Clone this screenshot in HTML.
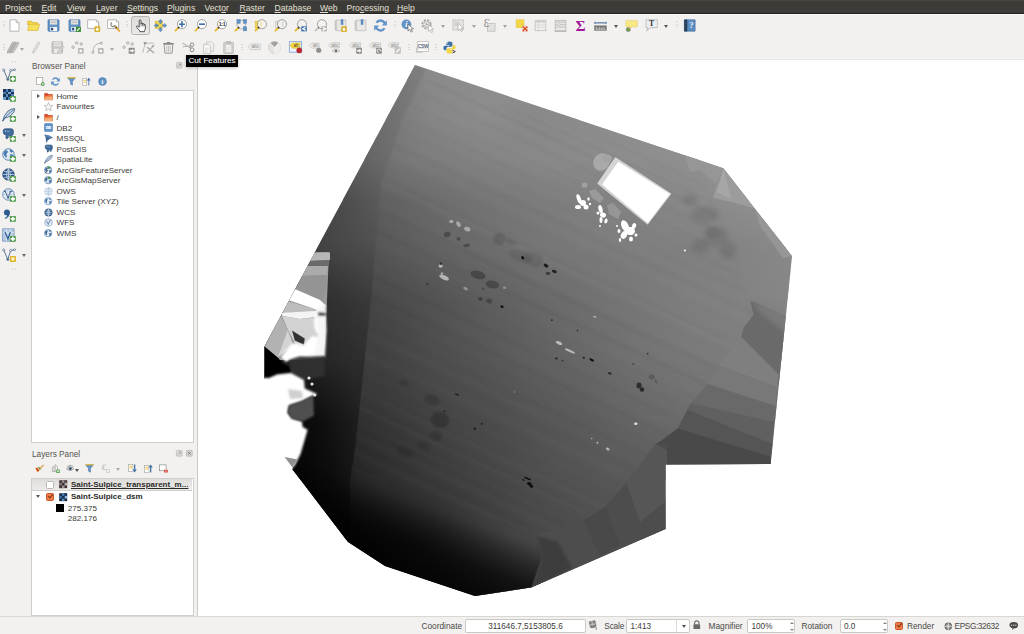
<!DOCTYPE html>
<html lang="en"><head><meta charset="utf-8"><title>QGIS</title>
<style>
html,body{margin:0;padding:0}
body{width:1024px;height:634px;position:relative;overflow:hidden;background:#f2f1f0;font-family:"Liberation Sans","DejaVu Sans",sans-serif;font-size:8.2px;color:#3c3b37}
body *{position:absolute;box-sizing:border-box}
u{position:static;text-decoration:underline}
#menubar{left:0;top:0;width:1024px;height:14px;background:linear-gradient(#4b4a45 0,#3c3b37 1.6px);border-bottom:1px solid #24221f}
.mi{top:2.8px;color:#e4e0d8;font-size:8.6px;line-height:10px;white-space:nowrap}
.mi u{text-decoration-thickness:0.6px;text-underline-offset:1px}
#tb{left:0;top:14px;width:1024px;height:45px;background:#f2f1f0;border-top:1.2px solid #fafaf9;border-bottom:1px solid #f5f4f3}
.ic{overflow:visible}
.ar{width:0;height:0;border-left:2.5px solid transparent;border-right:2.5px solid transparent;border-top:3px solid #666}
.sp{width:2px;height:8px;background:repeating-linear-gradient(#d9d7d3 0 1px,transparent 1px 2.6px)}
.hd{width:4px;height:2px;background:repeating-linear-gradient(90deg,#dad8d4 0 1px,transparent 1px 2.6px)}
#panbtn{left:131px;top:16px;width:19px;height:18.5px;border:1px solid #b5b3af;border-radius:2.5px;background:linear-gradient(#dedcd9,#eceae8)}
.ptitle{font-size:8.25px;line-height:12px;color:#55544f;white-space:nowrap}
.tree{background:#fff;border:1px solid #d0ceca}
.ti{font-size:8.1px;line-height:12px;color:#3c3b37;white-space:nowrap}
.ti.b{font-weight:bold;font-size:8px;color:#2c2b28}
.ex{width:0;height:0;border-top:2.5px solid transparent;border-bottom:2.5px solid transparent;border-left:3.5px solid #5a5955}
.exd{width:0;height:0;border-left:2.5px solid transparent;border-right:2.5px solid transparent;border-top:3.5px solid #5a5955}
#sel{left:32px;top:478.5px;width:160px;height:12px;background:linear-gradient(#dfddda,#ecebe9);border-bottom:1px solid #d0cecb}
.cb{width:8px;height:8px;background:#fff;border:1px solid #bab8b4;border-radius:1.5px}
.cb.on{background:#ef7b46;border-color:#c9562a}
.cb.on:after{content:"";position:absolute;left:0.9px;top:0.8px;width:4.2px;height:2.3px;border-left:1.3px solid #7a3414;border-bottom:1.3px solid #7a3414;transform:rotate(-50deg)}
#canvas{left:197px;top:58.5px;width:827px;height:558px;background:#fff;border-left:1px solid #cdcbc7;border-top:1px solid #e8e6e3}
#tip{left:186px;top:54.5px;width:52px;height:12.5px;background:#000;color:#fff;font-size:8.1px;line-height:12.5px;text-align:center;white-space:nowrap;box-shadow:0 1px 3px rgba(0,0,0,.25);letter-spacing:0.02px;-webkit-text-stroke:0.1px #fff}
#status{left:0;top:616px;width:1024px;height:18px;background:#f2f1f0;border-top:1px solid #d9d7d3}
.st{font-size:8.3px;line-height:12.8px;color:#4a4945;white-space:nowrap}
.inp{height:13.4px;background:#fff;border:1px solid #cbc9c5;border-radius:2px;font-size:8.2px;line-height:13.4px;color:#3c3b37;white-space:nowrap}
.su{width:0;height:0;border-left:2px solid transparent;border-right:2px solid transparent;border-bottom:2.5px solid #8a8884}
.sd{width:0;height:0;border-left:2px solid transparent;border-right:2px solid transparent;border-top:2.5px solid #8a8884}
</style></head>
<body>
<div id="menubar">
<span class="mi" style="left:5px">Pro<u>j</u>ect</span>
<span class="mi" style="left:41.5px"><u>E</u>dit</span>
<span class="mi" style="left:67px"><u>V</u>iew</span>
<span class="mi" style="left:96px"><u>L</u>ayer</span>
<span class="mi" style="left:127px"><u>S</u>ettings</span>
<span class="mi" style="left:167px"><u>P</u>lugins</span>
<span class="mi" style="left:204.5px">Vect<u>o</u>r</span>
<span class="mi" style="left:239.5px"><u>R</u>aster</span>
<span class="mi" style="left:274.5px"><u>D</u>atabase</span>
<span class="mi" style="left:320px"><u>W</u>eb</span>
<span class="mi" style="left:346.5px">Pro<u>c</u>essing</span>
<span class="mi" style="left:397px"><u>H</u>elp</span>
</div>
<div id="tb"></div>
<i class="sp" style="left:3.0px;top:21.0px"></i>
<i class="sp" style="left:126.0px;top:21.0px"></i>
<i class="sp" style="left:393.5px;top:21.0px"></i>
<i class="sp" style="left:675.5px;top:21.0px"></i>
<div id="panbtn"></div>
<svg class="ic" style="left:134.3px;top:18.8px" width="13" height="13" viewBox="0 0 16 16"><path d="M6.4 10.2 V2.4 Q6.4 1 7.5 1 Q8.6 1 8.6 2.4 V6 Q8.6 4.9 9.6 4.9 Q10.6 4.9 10.6 6.1 V6.7 Q10.6 5.7 11.5 5.7 Q12.4 5.7 12.4 6.9 V7.5 Q12.4 6.6 13.2 6.6 Q14 6.6 14 7.8 V11 Q14 13.4 12.8 14.6 V15.6 H7.2 V14.6 Q5.8 13.4 3.6 10.6 Q2.6 9.2 3.4 8.6 Q4.2 8.1 5.2 9.2 Z" fill="#fff" stroke="#2a2a2a" stroke-width="1" stroke-linejoin="round"/><path d="M8.6 6V9M10.6 6.7V9.2M12.4 7.5V9.4" stroke="#2a2a2a" stroke-width="0.7"/></svg>
<svg class="ic" style="left:7.5px;top:18.5px" width="13" height="13" viewBox="0 0 16 16"><path d="M2.5 1 H10 L13.5 4.5 V15 H2.5 Z" fill="#fff" stroke="#a9a8a6" stroke-width="1"/><path d="M10 1 V4.5 H13.5" fill="#e6e5e3" stroke="#a9a8a6" stroke-width="0.9"/></svg>
<svg class="ic" style="left:27.0px;top:18.5px" width="13" height="13" viewBox="0 0 16 16"><path d="M0.8 2.6 H5.5 L6.8 4.4 H13 V7 H0.8 Z" fill="#f3d64a" stroke="#d9b22e" stroke-width="0.8"/><path d="M0.8 14.2 L2.6 6.4 H15.6 L13.4 14.2 Z" fill="#f7df5e" stroke="#d9b22e" stroke-width="0.8"/></svg>
<svg class="ic" style="left:47.0px;top:18.5px" width="13" height="13" viewBox="0 0 16 16"><rect x="1.2" y="0.8" width="13.6" height="14.4" rx="1.4" fill="#6293c6" stroke="#3f6fa8" stroke-width="0.8"/><rect x="3.6" y="0.8" width="8.8" height="6" fill="#e4e3e1"/><path d="M4.4 2.6H11.6M4.4 4.4H11.6" stroke="#b5b4b2" stroke-width="0.8"/><rect x="4" y="9.8" width="8.4" height="5.2" fill="#f4f4f4"/><rect x="5" y="10.8" width="2.6" height="3.2" fill="#2c4f7c"/></svg>
<svg class="ic" style="left:67.5px;top:18.5px" width="13" height="13" viewBox="0 0 16 16"><rect x="1.2" y="0.8" width="13.6" height="14.4" rx="1.4" fill="#6293c6" stroke="#3f6fa8" stroke-width="0.8"/><rect x="3.6" y="0.8" width="8.8" height="6" fill="#e4e3e1"/><path d="M4.4 2.6H11.6M4.4 4.4H11.6" stroke="#b5b4b2" stroke-width="0.8"/><rect x="4" y="9.8" width="8.4" height="5.2" fill="#f4f4f4"/><rect x="5" y="10.8" width="2.6" height="3.2" fill="#2c4f7c"/><rect x="9.6" y="9.6" width="6.4" height="6.4" rx="0.8" fill="#3f8f3a"/><path d="M11 14.6 L14.4 11.2" stroke="#fff" stroke-width="1.4"/></svg>
<svg class="ic" style="left:86.7px;top:18.5px" width="13" height="13" viewBox="0 0 16 16"><path d="M0.8 1 H11.5 L14.2 3.7 V11.6 H0.8 Z" fill="#fff" stroke="#a9a8a6" stroke-width="1"/><path d="M11.5 1 V3.7 H14.2" fill="none" stroke="#a9a8a6" stroke-width="0.8"/><path d="M14.8 4.6 V12.2" stroke="#c8c7c5" stroke-width="0.8"/><rect x="9.2" y="9" width="7" height="7" rx="0.8" fill="#d8b230"/><path d="M12.7 10.3 L13.5 11.7 15 12 13.9 13.1 14.2 14.7 12.7 14 11.2 14.7 11.5 13.1 10.4 12 11.9 11.7Z" fill="#fff"/></svg>
<svg class="ic" style="left:107.0px;top:18.5px" width="13" height="13" viewBox="0 0 16 16"><path d="M0.8 1 H11.5 L14.2 3.7 V11.6 H0.8 Z" fill="#fff" stroke="#a9a8a6" stroke-width="1"/><path d="M11.5 1 V3.7 H14.2" fill="none" stroke="#a9a8a6" stroke-width="0.8"/><path d="M14.8 4.6 V12.2" stroke="#c8c7c5" stroke-width="0.8"/><path d="M6.2 4.4 A2.6 2.6 0 1 0 9.8 7.6" fill="none" stroke="#8e8d8b" stroke-width="1.6"/><path d="M9 8 L11 10" stroke="#8e8d8b" stroke-width="2"/><path d="M10.8 9.8 L15 14.6" stroke="#e5a93b" stroke-width="2.4" stroke-linecap="round"/><path d="M10.8 9.8 L12 11.2" stroke="#6e5a2c" stroke-width="2.4"/></svg>
<svg class="ic" style="left:154.0px;top:18.5px" width="13" height="13" viewBox="0 0 16 16"><rect x="1.4" y="2.6" width="9" height="9" fill="#f3d64a" stroke="#d9b22e" stroke-width="0.6"/><g fill="#6293c6" stroke="#3f6fa8" stroke-width="0.5"><path d="M8 0.2 L10.6 3 H9 V5.4 H7 V3 H5.4Z"/><path d="M8 15.8 L10.6 13 H9 V10.6 H7 V13 H5.4Z"/><path d="M0.2 8 L3 5.4 V7 H5.4 V9 H3 V10.6Z"/><path d="M15.8 8 L13 5.4 V7 H10.6 V9 H13 V10.6Z"/></g><rect x="6.6" y="6.6" width="2.8" height="2.8" fill="#f3d64a"/></svg>
<svg class="ic" style="left:174.0px;top:18.5px" width="13" height="13" viewBox="0 0 16 16"><circle cx="9.8" cy="6.4" r="5.6" fill="#fff" stroke="#8f8f8d" stroke-width="1"/><path d="M6.2 6.4H13.4M9.8 2.8V10" stroke="#3f6fa8" stroke-width="2"/><path d="M5.6 10.6 L1.2 15" stroke="#e8b928" stroke-width="2.2" stroke-linecap="butt"/><path d="M6.3 9.9 L5 11.2" stroke="#333" stroke-width="2.2"/></svg>
<svg class="ic" style="left:194.0px;top:18.5px" width="13" height="13" viewBox="0 0 16 16"><circle cx="9.8" cy="6.4" r="5.6" fill="#fff" stroke="#8f8f8d" stroke-width="1"/><path d="M6.2 6.4H13.4" stroke="#3f6fa8" stroke-width="2"/><path d="M5.6 10.6 L1.2 15" stroke="#e8b928" stroke-width="2.2" stroke-linecap="butt"/><path d="M6.3 9.9 L5 11.2" stroke="#333" stroke-width="2.2"/></svg>
<svg class="ic" style="left:214.0px;top:18.5px" width="13" height="13" viewBox="0 0 16 16"><circle cx="9.8" cy="6.4" r="5.6" fill="#fff" stroke="#8f8f8d" stroke-width="1"/><text x="9.8" y="8.9" font-family="Liberation Sans,sans-serif" font-size="6.6" font-weight="bold" text-anchor="middle" fill="#333" letter-spacing="-0.5">1:1</text><path d="M5.6 10.6 L1.2 15" stroke="#e8b928" stroke-width="2.2" stroke-linecap="butt"/><path d="M6.3 9.9 L5 11.2" stroke="#333" stroke-width="2.2"/></svg>
<svg class="ic" style="left:234.0px;top:18.5px" width="13" height="13" viewBox="0 0 16 16"><circle cx="9" cy="7" r="5.4" fill="#eeeeec" stroke="#9a9997" stroke-width="0.9"/><g fill="#6293c6" stroke="#3f6fa8" stroke-width="0.5"><rect x="3.6" y="0.6" width="4" height="4.6"/><rect x="11.6" y="0.6" width="4" height="4.6"/><rect x="11.6" y="9.6" width="4" height="5"/></g><path d="M5.6 10.6 L1.2 15" stroke="#e8b928" stroke-width="2.2"/><path d="M6.3 9.9 L5 11.2" stroke="#333" stroke-width="2.2"/></svg>
<svg class="ic" style="left:253.5px;top:18.5px" width="13" height="13" viewBox="0 0 16 16"><rect x="1.4" y="2.6" width="5" height="8.6" fill="#f3d64a" stroke="#d9b22e" stroke-width="0.6"/><circle cx="9.8" cy="6.4" r="5.6" fill="#f6f3ea" stroke="#8f8f8d" stroke-width="1"/><path d="M9 3.4 Q7.4 6.4 9 9.4" stroke="#f2e2b6" stroke-width="2.4" fill="none"/><path d="M5.6 10.6 L1.2 15" stroke="#e8b928" stroke-width="2.2" stroke-linecap="butt"/><path d="M6.3 9.9 L5 11.2" stroke="#333" stroke-width="2.2"/></svg>
<svg class="ic" style="left:273.5px;top:18.5px" width="13" height="13" viewBox="0 0 16 16"><rect x="1.4" y="2.6" width="5" height="8.6" fill="#e4e3e1" stroke="#bdbcba" stroke-width="0.6"/><circle cx="9.8" cy="6.4" r="5.6" fill="#f0f0ee" stroke="#8f8f8d" stroke-width="1"/><path d="M10.8 3 V9.8" stroke="#d8d7d5" stroke-width="1.6"/><path d="M5.6 10.6 L1.2 15" stroke="#e8b928" stroke-width="2.2" stroke-linecap="butt"/><path d="M6.3 9.9 L5 11.2" stroke="#333" stroke-width="2.2"/></svg>
<svg class="ic" style="left:294.0px;top:18.5px" width="13" height="13" viewBox="0 0 16 16"><circle cx="9.8" cy="6.4" r="5.6" fill="#f2f1ef" stroke="#8f8f8d" stroke-width="1"/><path d="M5.6 10.6 L1.2 15" stroke="#e8b928" stroke-width="2.2" stroke-linecap="butt"/><path d="M6.3 9.9 L5 11.2" stroke="#333" stroke-width="2.2"/><rect x="9" y="9" width="6.8" height="6.2" fill="#3f6fa8"/><path d="M14.2 10.2 L11 12.1 14.2 14" fill="none" stroke="#fff" stroke-width="1.6"/></svg>
<svg class="ic" style="left:314.0px;top:18.5px" width="13" height="13" viewBox="0 0 16 16"><circle cx="9.8" cy="6.4" r="5.6" fill="#f4f3f1" stroke="#8f8f8d" stroke-width="1"/><path d="M5.6 10.6 L1.2 15" stroke="#c6c5c3" stroke-width="2.2" stroke-linecap="butt"/><path d="M6.3 9.9 L5 11.2" stroke="#8a8987" stroke-width="2.2"/><rect x="9" y="9" width="6.8" height="6.2" fill="#b4b3b1"/><path d="M10.8 10.2 L14 12.1 10.8 14" fill="none" stroke="#fff" stroke-width="1.6"/></svg>
<svg class="ic" style="left:334.0px;top:18.5px" width="13" height="13" viewBox="0 0 16 16"><path d="M3.2 1.4 H14.6 V14.4 H3.2 Z" fill="#e9e8e6" stroke="#b4b3b1" stroke-width="0.8"/><path d="M3.2 1.4 Q1.4 1.6 1.4 3.2 V12.8 Q1.4 14.4 3.2 14.4" fill="#d2d1cf" stroke="#b4b3b1" stroke-width="0.8"/><path d="M8.6 0.6 H11.2 V7.4 L9.9 6.2 8.6 7.4Z" fill="#6293c6" stroke="#3f6fa8" stroke-width="0.4"/><rect x="8.8" y="9" width="7" height="7" rx="0.8" fill="#d8b230"/><path d="M12.3 10.3 L13.1 11.7 14.6 12 13.5 13.1 13.8 14.7 12.3 14 10.8 14.7 11.1 13.1 10 12 11.5 11.7Z" fill="#fff"/></svg>
<svg class="ic" style="left:353.5px;top:18.5px" width="13" height="13" viewBox="0 0 16 16"><path d="M3.2 1.4 H14.6 V14.4 H3.2 Z" fill="#e9e8e6" stroke="#b4b3b1" stroke-width="0.8"/><path d="M3.2 1.4 Q1.4 1.6 1.4 3.2 V12.8 Q1.4 14.4 3.2 14.4" fill="#d2d1cf" stroke="#b4b3b1" stroke-width="0.8"/><path d="M8.6 0.6 H11.2 V7.4 L9.9 6.2 8.6 7.4Z" fill="#6293c6" stroke="#3f6fa8" stroke-width="0.4"/></svg>
<svg class="ic" style="left:374.0px;top:18.5px" width="13" height="13" viewBox="0 0 16 16"><path d="M13.6 6.6 A5.8 5.8 0 0 0 3 4.6" fill="none" stroke="#6293c6" stroke-width="2.8"/><path d="M15.8 1.6 V8 H9.6Z" fill="#6293c6"/><path d="M2.4 9.4 A5.8 5.8 0 0 0 13 11.4" fill="none" stroke="#6293c6" stroke-width="2.8"/><path d="M0.2 14.4 V8 H6.4Z" fill="#6293c6"/></svg>
<svg class="ic" style="left:400.5px;top:18.5px" width="13" height="13" viewBox="0 0 16 16"><circle cx="6.6" cy="6.6" r="6" fill="#6293c6"/><text x="6.6" y="10.2" font-family="Liberation Serif,serif" font-size="10.5" font-weight="bold" font-style="italic" text-anchor="middle" fill="#fff">i</text><path d="M8.6 6.4 l0 8.4 2.2 -2 1.6 3.4 1.6 -0.8 -1.6 -3.2 3 -0.2Z" fill="#fff" stroke="#555" stroke-width="0.8" stroke-linejoin="round"/></svg>
<svg class="ic" style="left:420.5px;top:18.5px" width="13" height="13" viewBox="0 0 16 16"><circle cx="6.8" cy="6.6" r="5.2" fill="#e9e8e6" stroke="#a5a4a2" stroke-width="2.2" stroke-dasharray="2.4 1.7"/><circle cx="6.8" cy="6.6" r="3.4" fill="#f4f3f1" stroke="#a5a4a2" stroke-width="0.9"/><path d="M5.8 4.6 L9 6.6 5.8 8.6Z" fill="#a5a4a2"/><path d="M9 7 l0 8.4 2.2 -2 1.6 3.4 1.6 -0.8 -1.6 -3.2 3 -0.2Z" fill="#fff" stroke="#a5a4a2" stroke-width="0.8" stroke-linejoin="round"/></svg>
<svg class="ic" style="left:452.0px;top:18.5px" width="13" height="13" viewBox="0 0 16 16"><rect x="1" y="1" width="13" height="12.6" fill="#e5e4e2" stroke="#a9a8a6" stroke-width="0.9" stroke-dasharray="1.6 1"/><rect x="2.6" y="2.6" width="6.4" height="6.4" fill="#d6d5d3"/><path d="M7.4 5.6 l0 8.4 2.2 -2 1.6 3.4 1.6 -0.8 -1.6 -3.2 3 -0.2Z" fill="#fff" stroke="#a5a4a2" stroke-width="0.8" stroke-linejoin="round"/></svg>
<svg class="ic" style="left:483.0px;top:18.5px" width="13" height="13" viewBox="0 0 16 16"><rect x="5.4" y="5.6" width="9.4" height="9.4" fill="#e3e2e0" stroke="#b4b3b1" stroke-width="0.8"/><text x="4.8" y="10.4" font-family="DejaVu Serif,Liberation Serif,serif" font-size="13" text-anchor="middle" fill="#8f8e8c">Ɛ</text></svg>
<svg class="ic" style="left:514.5px;top:18.5px" width="13" height="13" viewBox="0 0 16 16"><rect x="1.4" y="1" width="9.6" height="9.6" fill="#f3d64a" stroke="#e6c53c" stroke-width="0.8"/><rect x="9.2" y="8.8" width="6.4" height="6.4" fill="#fff"/><path d="M9.6 9.2 L15.2 14.8 M15.2 9.2 L9.6 14.8" stroke="#d44a25" stroke-width="1.8"/><rect x="9.2" y="8.8" width="6.4" height="6.4" fill="none" stroke="#e58a6e" stroke-width="0.6"/></svg>
<svg class="ic" style="left:533.5px;top:18.5px" width="13" height="13" viewBox="0 0 16 16"><rect x="1.4" y="1.6" width="13.2" height="12.8" fill="#f0efed" stroke="#bcbbb9" stroke-width="0.9"/><rect x="1.4" y="1.6" width="13.2" height="2.8" fill="#d0cfcd"/><path d="M1.4 7.4H14.6M1.4 10.2H14.6M5.6 1.6V14.4" stroke="#cfcecc" stroke-width="0.7"/></svg>
<svg class="ic" style="left:553.5px;top:18.5px" width="13" height="13" viewBox="0 0 16 16"><rect x="1.4" y="1.6" width="13.2" height="12.8" fill="#efeeec" stroke="#b4b3b1" stroke-width="0.9"/><path d="M1.4 4H14.6M1.4 7H14.6M1.4 10H14.6" stroke="#a9a8a6" stroke-width="0.8"/><g fill="#fff" stroke="#a9a8a6" stroke-width="0.6"><circle cx="5" cy="4" r="1.3"/><circle cx="11" cy="4" r="1.3"/><circle cx="6" cy="7" r="1.3"/><circle cx="4" cy="10" r="1.3"/><circle cx="7.4" cy="10" r="1.3"/><circle cx="11.6" cy="10" r="1.3"/></g><path d="M0.6 15.2H15.4" stroke="#a9a8a6" stroke-width="1"/></svg>
<svg class="ic" style="left:573.5px;top:18.5px" width="13" height="13" viewBox="0 0 16 16"><text x="8" y="14.6" font-family="Liberation Serif,serif" font-size="19" font-weight="bold" text-anchor="middle" fill="#a3129c">Σ</text></svg>
<svg class="ic" style="left:593.5px;top:18.5px" width="13" height="13" viewBox="0 0 16 16"><path d="M1 4.8H15" stroke="#2f5d92" stroke-width="1.2"/><path d="M1 3.4V6.2M15 3.4V6.2" stroke="#2f5d92" stroke-width="0.8"/><rect x="0.8" y="8.4" width="14.4" height="5.6" fill="#7d7d7b" stroke="#6a6a68" stroke-width="0.6"/><path d="M3 10.2V13.8M5 11.4V13.8M7 10.2V13.8M9 11.4V13.8M11 10.2V13.8M13 11.4V13.8" stroke="#f0f0ee" stroke-width="0.8"/></svg>
<svg class="ic" style="left:625.0px;top:18.5px" width="13" height="13" viewBox="0 0 16 16"><path d="M2.4 1.6 H14 Q15.4 1.6 15.4 3 V8.4 Q15.4 9.8 14 9.8 H8.4 L5.4 12.6 L5.8 9.8 H2.4 Q1 9.8 1 8.4 V3 Q1 1.6 2.4 1.6Z" fill="#f7e785" stroke="#e2c86a" stroke-width="0.8" stroke-dasharray="1.6 0.8"/><circle cx="4" cy="13" r="2.6" fill="#5d9a4c" stroke="#8a8987" stroke-width="0.8"/><path d="M3.4 13.6 L6.4 10.6" stroke="#e3a43a" stroke-width="1.2"/></svg>
<svg class="ic" style="left:644.5px;top:18.5px" width="13" height="13" viewBox="0 0 16 16"><path d="M1.4 1 H15 V10.6 H7 L2 14.6 L4 10.6 H1.4Z" fill="#f6f8fb" stroke="#a9a8a6" stroke-width="0.9"/><rect x="2.6" y="2.2" width="11.2" height="7.2" fill="#e9eef6"/><text x="8.2" y="9.2" font-family="Liberation Serif,serif" font-size="9.5" font-weight="bold" text-anchor="middle" fill="#333">T</text></svg>
<svg class="ic" style="left:683.0px;top:18.5px" width="13" height="13" viewBox="0 0 16 16"><rect x="1.6" y="0.8" width="13.4" height="14.4" rx="0.6" fill="#5a8cc2" stroke="#3c6494" stroke-width="0.6"/><rect x="1.6" y="0.8" width="3.6" height="14.4" fill="#23364f"/><path d="M2.6 3H4.2M2.6 5.4H4.2M2.6 7.8H4.2M2.6 10.2H4.2M2.6 12.6H4.2" stroke="#5a7294" stroke-width="0.7"/><text x="10.2" y="11.6" font-family="Liberation Serif,serif" font-size="10.5" font-weight="bold" text-anchor="middle" fill="#f2f5f9">?</text></svg>
<i class="ar" style="left:440.5px;top:24.5px;border-top-color:#a3a2a0"></i>
<i class="ar" style="left:471.5px;top:24.5px;border-top-color:#a3a2a0"></i>
<i class="ar" style="left:502.5px;top:24.5px;border-top-color:#a3a2a0"></i>
<i class="ar" style="left:613.5px;top:24.5px;border-top-color:#55534f"></i>
<i class="ar" style="left:664.2px;top:24.5px;border-top-color:#55534f"></i>
<i class="sp" style="left:3.0px;top:43.5px"></i>
<i class="sp" style="left:241.0px;top:43.5px"></i>
<i class="sp" style="left:408.0px;top:43.5px"></i>
<i class="sp" style="left:435.0px;top:43.5px"></i>
<svg class="ic" style="left:7.0px;top:41.0px" width="13" height="13" viewBox="0 0 16 16"><path d="M0.3999999999999999 15 L1.0 11.4 L7.0 1 L9.4 2.4 L3.4 12.8 Z" fill="#bdbcba" stroke="#a3a2a0" stroke-width="0.7" stroke-linejoin="round"/><path d="M0.3999999999999999 15 L0.7999999999999998 12.8 L2.1999999999999997 13.8Z" fill="#a3a2a0"/><path d="M3.2 15 L3.8 11.4 L9.799999999999999 1 L12.2 2.4 L6.2 12.8 Z" fill="#b4b3b1" stroke="#9c9b99" stroke-width="0.7" stroke-linejoin="round"/><path d="M3.2 15 L3.5999999999999996 12.8 L5.0 13.8Z" fill="#9c9b99"/><path d="M6 15 L6.6 11.4 L12.6 1 L15 2.4 L9 12.8 Z" fill="#c4c3c1" stroke="#a9a8a6" stroke-width="0.7" stroke-linejoin="round"/><path d="M6 15 L6.4 12.8 L7.8 13.8Z" fill="#a9a8a6"/></svg>
<svg class="ic" style="left:30.0px;top:41.0px" width="13" height="13" viewBox="0 0 16 16"><path d="M3.4 15 L4.0 11.4 L10.0 1 L12.4 2.4 L6.4 12.8 Z" fill="#e2e1df" stroke="#b9b8b6" stroke-width="0.7" stroke-linejoin="round"/><path d="M3.4 15 L3.8 12.8 L5.199999999999999 13.8Z" fill="#b9b8b6"/></svg>
<svg class="ic" style="left:50.5px;top:41.0px" width="13" height="13" viewBox="0 0 16 16"><rect x="1.2" y="0.8" width="13" height="14.4" rx="1.2" fill="#c9c8c6" stroke="#aaa9a7" stroke-width="0.8"/><rect x="3.4" y="0.8" width="8.6" height="5.6" fill="#e8e7e5"/><path d="M4.2 2.6H11.2M4.2 4.4H11.2" stroke="#c4c3c1" stroke-width="0.8"/><rect x="3.8" y="9.6" width="8.2" height="5.4" fill="#ecebe9"/><path d="M8 14.8 L9 11.8 L14.6 6.4 L16 7.8 L10.6 13.4Z" fill="#dcdbd9" stroke="#aaa9a7" stroke-width="0.7"/></svg>
<svg class="ic" style="left:71.0px;top:41.0px" width="13" height="13" viewBox="0 0 16 16"><g fill="#dad9d7" stroke="#a9a8a6" stroke-width="0.9"><circle cx="2.6" cy="7.6" r="1.6"/><circle cx="7" cy="2.4" r="1.6"/><circle cx="12.6" cy="3.8" r="1.6"/></g><rect x="8.6" y="8.6" width="7" height="7" rx="0.8" fill="#b9b8b6"/><path d="M12.1 9.9 L12.9 11.3 14.4 11.6 13.3 12.7 13.6 14.3 12.1 13.6 10.6 14.3 10.9 12.7 9.8 11.6 11.3 11.3Z" fill="#fff"/></svg>
<svg class="ic" style="left:91.0px;top:41.0px" width="13" height="13" viewBox="0 0 16 16"><path d="M2.4 14 Q2.4 3 12.6 2.4" fill="none" stroke="#aaa9a7" stroke-width="1"/><rect x="11.4" y="1.2" width="2.6" height="2.6" fill="#c4c3c1" stroke="#aaa9a7" stroke-width="0.5"/><rect x="1.2" y="13" width="2.4" height="2.4" fill="#c4c3c1" stroke="#aaa9a7" stroke-width="0.5"/><rect x="8.6" y="8.6" width="7" height="7" rx="0.8" fill="#b9b8b6"/><path d="M12.1 9.9 L12.9 11.3 14.4 11.6 13.3 12.7 13.6 14.3 12.1 13.6 10.6 14.3 10.9 12.7 9.8 11.6 11.3 11.3Z" fill="#fff"/></svg>
<svg class="ic" style="left:121.7px;top:41.0px" width="13" height="13" viewBox="0 0 16 16"><g fill="#dad9d7" stroke="#a9a8a6" stroke-width="0.9"><circle cx="2.6" cy="7.6" r="1.6"/><circle cx="7" cy="2.4" r="1.6"/><circle cx="12.6" cy="3.8" r="1.6"/></g><rect x="8.2" y="8.4" width="7.4" height="7.4" rx="0.8" fill="#8d8c8a"/><path d="M9.4 11.2 H12.4 V9.6 L15 12.1 L12.4 14.6 V13 H9.4Z" fill="#fff"/></svg>
<svg class="ic" style="left:141.5px;top:41.0px" width="13" height="13" viewBox="0 0 16 16"><path d="M3.4 2.6 H14.6" stroke="#aaa9a7" stroke-width="0.9"/><path d="M4 3 L0.8 14.6" stroke="#aaa9a7" stroke-width="0.9"/><rect x="2.2" y="1.2" width="3" height="3" fill="#9c9b99"/><path d="M6.4 7.6 L14.8 14.8" stroke="#a3a2a0" stroke-width="1.6"/><path d="M14.8 5 L6 14.6" stroke="#b4b3b1" stroke-width="1.6"/><path d="M14.8 5 L11.8 6.2 13.6 8Z" fill="#9c9b99"/></svg>
<svg class="ic" style="left:161.5px;top:41.0px" width="13" height="13" viewBox="0 0 16 16"><path d="M2.6 4 H13.4 L12.4 15 H3.6Z" fill="#f2f1ef" stroke="#858482" stroke-width="1"/><path d="M1.4 3.2 H14.6" stroke="#858482" stroke-width="1.4"/><path d="M5.8 1.8 H10.2" stroke="#858482" stroke-width="1.2"/><path d="M6 5.6V13.4M8 5.6V13.4M10 5.6V13.4" stroke="#b9b8b6" stroke-width="1"/></svg>
<svg class="ic" style="left:181.5px;top:41.0px" width="13" height="13" viewBox="0 0 16 16"><path d="M0.6 2.4 L10 8.4 M0.6 7.4 L10.4 5.8" stroke="#b9b8b6" stroke-width="1.4"/><circle cx="12.4" cy="4.4" r="2.2" fill="none" stroke="#8a8987" stroke-width="1.2"/><circle cx="12.4" cy="10.8" r="2.4" fill="none" stroke="#8a8987" stroke-width="1.2"/><path d="M9.4 7 L11 5.6 M9.8 7.6 L11 9.2" stroke="#8a8987" stroke-width="1.2"/></svg>
<svg class="ic" style="left:201.5px;top:41.0px" width="13" height="13" viewBox="0 0 16 16"><path d="M5.6 1 H11.6 L14.4 3.8 V12.6 H5.6Z" fill="#f0efed" stroke="#bcbbb9" stroke-width="0.8"/><path d="M1.8 4 H7.8 L10.6 6.8 V15.2 H1.8Z" fill="#f6f5f3" stroke="#b4b3b1" stroke-width="0.8"/><path d="M3.4 9H8.6M3.4 11H8.6M3.4 13H7" stroke="#d6d5d3" stroke-width="0.7"/></svg>
<svg class="ic" style="left:221.5px;top:41.0px" width="13" height="13" viewBox="0 0 16 16"><rect x="2" y="1.6" width="12" height="13.8" rx="1" fill="#d2d1cf" stroke="#b4b3b1" stroke-width="0.8"/><rect x="5.4" y="0.6" width="5.2" height="2.4" rx="0.8" fill="#c0bfbd" stroke="#aaa9a7" stroke-width="0.5"/><path d="M4.4 4.4 H9.8 L12 6.6 V14 H4.4Z" fill="#f4f3f1" stroke="#bcbbb9" stroke-width="0.6"/><path d="M5.8 8.4H10.6M5.8 10.4H10.6M5.8 12.4H9" stroke="#d2d1cf" stroke-width="0.7"/></svg>
<svg class="ic" style="left:247.5px;top:41.0px" width="13" height="13" viewBox="0 0 16 16"><path d="M0.4 7.1 L3.4 3.6 H15.0 V10.6 H3.4Z" fill="#ecebe9" stroke="#b9b8b6" stroke-width="0.7"/><text x="8.9" y="9.1" font-family="Liberation Sans,sans-serif" font-size="5.6" text-anchor="middle" fill="#8a8987">abc</text></svg>
<svg class="ic" style="left:267.5px;top:41.0px" width="13" height="13" viewBox="0 0 16 16"><circle cx="8" cy="8" r="7.4" fill="#e4e3e1" stroke="#c4c3c1" stroke-width="0.7"/><path d="M8 8 L3 2.6 A7.4 7.4 0 0 1 13 2.6Z" fill="#a3a2a0"/><path d="M8 8 L13 2.6 A7.4 7.4 0 0 1 8.6 15.4Z" fill="#efeeec"/><path d="M8 8 L3 2.6 M8 8 L13 2.6 M8 8 L8.4 15.4" stroke="#fafaf8" stroke-width="0.8"/></svg>
<svg class="ic" style="left:288.5px;top:41.0px" width="13" height="13" viewBox="0 0 16 16"><rect x="0.4" y="0.8" width="15.2" height="13" fill="#eef3fa" stroke="#7ba3d8" stroke-width="1"/><path d="M1 5.6 L4 2.4 H13.6 V8.8 H4Z" fill="#f5d84c" stroke="#d8b42e" stroke-width="0.7"/><text x="8.5" y="7.300000000000001" font-family="Liberation Sans,sans-serif" font-size="5.6" text-anchor="middle" fill="#4a3b10">ab</text><path d="M12.2 5 V9" stroke="#c8c7c5" stroke-width="1"/><circle cx="12.6" cy="11.6" r="3.2" fill="#c0262c" stroke="#9a1c20" stroke-width="0.5"/></svg>
<svg class="ic" style="left:308.5px;top:41.0px" width="13" height="13" viewBox="0 0 16 16"><path d="M0.4 5.7 L3.4 2.6 H12.4 V8.8 H3.4Z" fill="#ecebe9" stroke="#b9b8b6" stroke-width="0.7"/><text x="7.6000000000000005" y="7.300000000000001" font-family="Liberation Sans,sans-serif" font-size="5.6" text-anchor="middle" fill="#8a8987">ab</text><circle cx="12" cy="11.4" r="3.2" fill="#8f8e8c"/><path d="M12.4 4.8V8" stroke="#c8c7c5" stroke-width="0.9"/></svg>
<svg class="ic" style="left:328.0px;top:41.0px" width="13" height="13" viewBox="0 0 16 16"><path d="M0.6 5.300000000000001 L3.6 2.2 H14.2 V8.4 H3.6Z" fill="#ecebe9" stroke="#b9b8b6" stroke-width="0.7"/><text x="8.6" y="6.9" font-family="Liberation Sans,sans-serif" font-size="5.6" text-anchor="middle" fill="#8a8987">abc</text><path d="M5 12.4 Q9.6 8 14.6 12.4 Q9.6 16 5 12.4Z" fill="#f4f3f1" stroke="#a3a2a0" stroke-width="0.7"/><circle cx="9.8" cy="12.2" r="1.6" fill="#6e6d6b"/></svg>
<svg class="ic" style="left:348.5px;top:41.0px" width="13" height="13" viewBox="0 0 16 16"><path d="M0.6 5.300000000000001 L3.6 2.2 H14.2 V8.4 H3.6Z" fill="#ecebe9" stroke="#b9b8b6" stroke-width="0.7"/><text x="8.6" y="6.9" font-family="Liberation Sans,sans-serif" font-size="5.6" text-anchor="middle" fill="#8a8987">abc</text><rect x="8.8" y="8.4" width="7" height="7.2" rx="0.8" fill="#8d8c8a"/><path d="M9.8 11.2 H12.6 V9.6 L15.2 12 L12.6 14.4 V12.8 H9.8Z" fill="#fff"/></svg>
<svg class="ic" style="left:368.5px;top:41.0px" width="13" height="13" viewBox="0 0 16 16"><path d="M0.6 5.300000000000001 L3.6 2.2 H14.2 V8.4 H3.6Z" fill="#ecebe9" stroke="#b9b8b6" stroke-width="0.7"/><text x="8.6" y="6.9" font-family="Liberation Sans,sans-serif" font-size="5.6" text-anchor="middle" fill="#8a8987">abc</text><rect x="8.8" y="8.4" width="7" height="7.2" rx="0.8" fill="#8d8c8a"/><path d="M14.2 12 A2 2 0 1 0 12.2 14" fill="none" stroke="#fff" stroke-width="0.9"/><path d="M13 11.4 H15 V13.2Z" fill="#fff"/></svg>
<svg class="ic" style="left:388.0px;top:41.0px" width="13" height="13" viewBox="0 0 16 16"><path d="M0.4 5.300000000000001 Q1 2.2 3.4 2.2 H13.0 V8.4 H3.4Z" fill="#ecebe9" stroke="#b9b8b6" stroke-width="0.7"/><text x="7.9" y="6.9" font-family="Liberation Sans,sans-serif" font-size="5.6" text-anchor="middle" fill="#8a8987">abc</text><rect x="8.6" y="8.2" width="7" height="7.2" fill="#c6c5c3" stroke="#b4b3b1" stroke-width="0.5"/><path d="M10.2 14 L14.2 9.8" stroke="#fff" stroke-width="1.6"/></svg>
<svg class="ic" style="left:415.5px;top:41.0px" width="13" height="13" viewBox="0 0 16 16"><rect x="0.8" y="8.6" width="7" height="5.6" fill="#e9e8e6" stroke="#bcbbb9" stroke-width="0.7"/><rect x="1.6" y="0.8" width="13.8" height="12" fill="#fff" stroke="#b4b3b1" stroke-width="0.9"/><text x="8.6" y="8.8" font-family="Liberation Sans,sans-serif" font-size="5.8" font-weight="bold" text-anchor="middle" fill="#55667a" letter-spacing="-0.2">CSW</text><path d="M2.4 9.6H14.6" stroke="#c8c7c5" stroke-width="0.8"/></svg>
<svg class="ic" style="left:442.5px;top:41.0px" width="13" height="13" viewBox="0 0 16 16"><path d="M7.6 0.6 Q4.2 0.6 4.2 3 V5 H8 V5.8 H2.6 Q0.4 5.8 0.4 8.6 Q0.4 11.4 2.6 11.4 H4.2 V9.2 Q4.2 7.2 6.4 7.2 H9.8 Q11.6 7.2 11.6 5.4 V3 Q11.6 0.6 7.6 0.6Z" fill="#3b6fa5"/><circle cx="5.8" cy="2.6" r="0.8" fill="#fff"/><path d="M8.4 15.6 Q11.8 15.6 11.8 13.2 V11.2 H8 V10.4 H13.4 Q15.6 10.4 15.6 7.6 Q15.6 4.8 13.4 4.8 H11.8 V7 Q11.8 9 9.6 9 H6.2 Q4.4 9 4.4 10.8 V13.2 Q4.4 15.6 8.4 15.6Z" fill="#f4d548"/><path d="M11.6 11.4 L15.2 13 L11.6 14.8" fill="none" stroke="#333" stroke-width="1.1"/></svg>
<i class="ar" style="left:20.1px;top:47.5px;border-top-color:#a9a8a6"></i>
<i class="ar" style="left:110.0px;top:47.5px;border-top-color:#a9a8a6"></i>
<svg class="ic" style="left:2.0px;top:67.5px" width="14" height="14" viewBox="0 0 16 16"><path d="M2 2.4 L6.6 13 L10 2.8 L14.4 2" fill="none" stroke="#55738f" stroke-width="1.1"/><g fill="#e8eef4" stroke="#55738f" stroke-width="0.8"><circle cx="2" cy="2.4" r="1.3"/><circle cx="6.6" cy="13" r="1.3" fill="#55738f"/><circle cx="10" cy="2.8" r="1.3"/><circle cx="14.4" cy="2" r="1.1"/></g><rect x="9" y="9" width="6.8" height="6.8" rx="0.8" fill="#4f9d4a"/><path d="M12.4 10V14.8M10 12.4H14.8" stroke="#fff" stroke-width="1.8"/></svg>
<svg class="ic" style="left:2.0px;top:87.5px" width="14" height="14" viewBox="0 0 16 16"><g shape-rendering="crispEdges"><rect x="0.6" y="0.6" width="3.4" height="3.4" fill="#1d3557"/><rect x="4.0" y="0.6" width="3.4" height="3.4" fill="#4d7fb8"/><rect x="7.3999999999999995" y="0.6" width="3.4" height="3.4" fill="#1d3557"/><rect x="10.799999999999999" y="0.6" width="3.4" height="3.4" fill="#6b9bd0"/><rect x="0.6" y="4.0" width="3.4" height="3.4" fill="#4d7fb8"/><rect x="4.0" y="4.0" width="3.4" height="3.4" fill="#1d3557"/><rect x="7.3999999999999995" y="4.0" width="3.4" height="3.4" fill="#7aa8d8"/><rect x="10.799999999999999" y="4.0" width="3.4" height="3.4" fill="#1d3557"/><rect x="0.6" y="7.3999999999999995" width="3.4" height="3.4" fill="#1d3557"/><rect x="4.0" y="7.3999999999999995" width="3.4" height="3.4" fill="#5d8fc6"/><rect x="7.3999999999999995" y="7.3999999999999995" width="3.4" height="3.4" fill="#1d3557"/><rect x="10.799999999999999" y="7.3999999999999995" width="3.4" height="3.4" fill="#4d7fb8"/><rect x="0.6" y="10.799999999999999" width="3.4" height="3.4" fill="#6b9bd0"/><rect x="4.0" y="10.799999999999999" width="3.4" height="3.4" fill="#1d3557"/><rect x="7.3999999999999995" y="10.799999999999999" width="3.4" height="3.4" fill="#4d7fb8"/><rect x="10.799999999999999" y="10.799999999999999" width="3.4" height="3.4" fill="#1d3557"/></g><rect x="9" y="9" width="6.8" height="6.8" rx="0.8" fill="#4f9d4a"/><path d="M12.4 10V14.8M10 12.4H14.8" stroke="#fff" stroke-width="1.8"/></svg>
<svg class="ic" style="left:2.0px;top:107.5px" width="14" height="14" viewBox="0 0 16 16"><path d="M0.8 15 Q2 8 7 3.4 Q11 0.4 14.6 0.8 Q14.6 5 10 8.6 Q6.4 11.2 3 11.6 Z" fill="#c9d6e6" stroke="#3c5f88" stroke-width="1"/><path d="M0.8 15 Q5 8 13 2" fill="none" stroke="#3c5f88" stroke-width="0.8"/><rect x="9" y="9" width="6.8" height="6.8" rx="0.8" fill="#4f9d4a"/><path d="M12.4 10V14.8M10 12.4H14.8" stroke="#fff" stroke-width="1.8"/></svg>
<svg class="ic" style="left:2.0px;top:127.5px" width="14" height="14" viewBox="0 0 16 16"><path d="M1.4 2.6 Q1.4 0.8 4 0.8 H10.4 Q13 0.8 13 3.2 V6.4 Q13 8.4 11.2 8.4 V11 H9 V8.6 H7.4 Q7.6 12 5.6 12.4 Q4.2 12.4 4.4 10.4 L4.8 8 Q1.4 7.6 1.4 4.8Z" fill="#3f6b9c" stroke="#2a4a70" stroke-width="0.7"/><path d="M5 3.4 Q7 5 9 3.4" fill="none" stroke="#a9c3e0" stroke-width="0.7"/><circle cx="4" cy="3.4" r="0.6" fill="#fff"/><rect x="9" y="9" width="6.8" height="6.8" rx="0.8" fill="#4f9d4a"/><path d="M12.4 10V14.8M10 12.4H14.8" stroke="#fff" stroke-width="1.8"/></svg>
<svg class="ic" style="left:2.0px;top:147.5px" width="14" height="14" viewBox="0 0 16 16"><circle cx="7.4" cy="7.4" r="6.6" fill="#dfe8f2" stroke="#4a7ab0" stroke-width="1"/><path d="M3 3.4 Q5 2 6.4 3.4 Q7.4 5 5.6 6 Q4.4 7.6 5.6 9.4 Q5.4 11.4 4 10.6 Q2 8.4 1.6 6Z M8.6 1.6 Q11 1.6 12.6 3.6 Q12 5.4 10.4 5 Q8.8 4.4 8.6 1.6Z M9 7.4 Q11.4 6.6 13.4 8.4 Q12.8 11.4 10.4 12.8 Q9 11 9.6 9.4Z" fill="#4a7ab0"/><rect x="9" y="9" width="6.8" height="6.8" rx="0.8" fill="#4f9d4a"/><path d="M12.4 10V14.8M10 12.4H14.8" stroke="#fff" stroke-width="1.8"/></svg>
<svg class="ic" style="left:2.0px;top:167.5px" width="14" height="14" viewBox="0 0 16 16"><circle cx="7.4" cy="7.4" r="6.6" fill="#2f5d92" stroke="#1f3f66" stroke-width="0.8"/><path d="M0.8 7.4H14M7.4 0.8V14M2.2 3.6Q7.4 6 12.6 3.6M2.2 11.2Q7.4 8.8 12.6 11.2M7.4 0.8Q3 7.4 7.4 14M7.4 0.8Q11.8 7.4 7.4 14" fill="none" stroke="#dbe6f2" stroke-width="0.8"/><rect x="9" y="9" width="6.8" height="6.8" rx="0.8" fill="#4f9d4a"/><path d="M12.4 10V14.8M10 12.4H14.8" stroke="#fff" stroke-width="1.8"/></svg>
<svg class="ic" style="left:2.0px;top:187.5px" width="14" height="14" viewBox="0 0 16 16"><circle cx="7.4" cy="7.4" r="6.6" fill="#e4ebf3" stroke="#5c85b3" stroke-width="1"/><path d="M0.8 7.4H14M7.4 0.8Q3 7.4 7.4 14M7.4 0.8Q11.8 7.4 7.4 14" fill="none" stroke="#9db8d6" stroke-width="0.6"/><path d="M3.4 3.6 L7 11 L9.6 4 L12.4 3.4" fill="none" stroke="#3c5f88" stroke-width="1"/><circle cx="3.4" cy="3.6" r="1" fill="#3c5f88"/><circle cx="7" cy="11" r="1" fill="#3c5f88"/><circle cx="9.6" cy="4" r="1" fill="#3c5f88"/><rect x="9" y="9" width="6.8" height="6.8" rx="0.8" fill="#4f9d4a"/><path d="M12.4 10V14.8M10 12.4H14.8" stroke="#fff" stroke-width="1.8"/></svg>
<svg class="ic" style="left:2.0px;top:207.5px" width="14" height="14" viewBox="0 0 16 16"><circle cx="5.6" cy="5" r="3.4" fill="#2f5d92"/><path d="M8.8 4.4 Q9.6 10 4 12.6 L3.2 11.4 Q6.4 9.6 6 7.6Z" fill="#2f5d92"/><rect x="9" y="9" width="6.8" height="6.8" rx="0.8" fill="#4f9d4a"/><path d="M12.4 10V14.8M10 12.4H14.8" stroke="#fff" stroke-width="1.8"/></svg>
<svg class="ic" style="left:2.0px;top:227.5px" width="14" height="14" viewBox="0 0 16 16"><rect x="0.8" y="1" width="13" height="14" fill="#b9cde2" stroke="#5c85b3" stroke-width="0.8"/><path d="M0.8 5.4 H13.8 M5 1 V15 M9.4 1V15" stroke="#e9f0f7" stroke-width="0.8"/><path d="M3.4 4.6 L6.8 12.6 L9.6 4.6" fill="none" stroke="#2f5d92" stroke-width="1.4"/><rect x="9" y="9" width="6.8" height="6.8" rx="0.8" fill="#4f9d4a"/><path d="M12.4 10V14.8M10 12.4H14.8" stroke="#fff" stroke-width="1.8"/></svg>
<svg class="ic" style="left:2.0px;top:247.5px" width="14" height="14" viewBox="0 0 16 16"><path d="M2 2.4 L6.6 13 L10 2.8 L14.4 2" fill="none" stroke="#55738f" stroke-width="1.1"/><g fill="#e8eef4" stroke="#55738f" stroke-width="0.8"><circle cx="2" cy="2.4" r="1.3"/><circle cx="6.6" cy="13" r="1.3" fill="#55738f"/><circle cx="10" cy="2.8" r="1.3"/><circle cx="14.4" cy="2" r="1.1"/></g><rect x="9" y="9" width="7" height="7" rx="0.9" fill="#e0b62e"/><rect x="10.8" y="10.8" width="3.4" height="3.4" fill="#fff6cf"/></svg>
<i class="ar" style="left:22.0px;top:133.5px;border-top-color:#6b6a68"></i>
<i class="ar" style="left:22.0px;top:153.5px;border-top-color:#6b6a68"></i>
<i class="ar" style="left:22.0px;top:193.5px;border-top-color:#6b6a68"></i>
<i class="ar" style="left:22.0px;top:253.5px;border-top-color:#6b6a68"></i>
<i class="hd" style="left:12px;top:61px"></i><i class="hd" style="left:12px;top:268px"></i>
<div class="ptitle" style="left:32px;top:61.2px">Browser Panel</div>
<svg class="ic" style="left:176.3px;top:62.1px" width="6.6" height="6.6" viewBox="0 0 16 16"><rect x="1" y="1" width="14" height="14" rx="2.4" fill="#dbdad7" stroke="#b4b3b0" stroke-width="1.6"/><path d="M5 11 L11 5 M7.4 5 H11 V8.6" fill="none" stroke="#8f8e8b" stroke-width="1.5"/></svg>
<svg class="ic" style="left:35.5px;top:77.0px" width="9" height="9" viewBox="0 0 16 16"><rect x="1" y="1" width="11" height="12" fill="#fff" stroke="#9c9b99" stroke-width="1.2"/><circle cx="12" cy="12.4" r="3.4" fill="#4b9a45"/><path d="M12 10.4V14.4M10 12.4H14" stroke="#fff" stroke-width="1.2"/></svg>
<svg class="ic" style="left:51.0px;top:77.0px" width="9" height="9" viewBox="0 0 16 16"><path d="M13.6 6.6 A5.8 5.8 0 0 0 3 4.6" fill="none" stroke="#6293c6" stroke-width="2.8"/><path d="M15.8 1.6 V8 H9.6Z" fill="#6293c6"/><path d="M2.4 9.4 A5.8 5.8 0 0 0 13 11.4" fill="none" stroke="#6293c6" stroke-width="2.8"/><path d="M0.2 14.4 V8 H6.4Z" fill="#6293c6"/></svg>
<svg class="ic" style="left:66.5px;top:77.0px" width="9" height="9" viewBox="0 0 16 16"><path d="M1 1.4 H15 L9.8 8 V14.6 L6.2 12.8 V8Z" fill="#6293c6" stroke="#3f6fa8" stroke-width="0.8"/><path d="M1 1.4H15" stroke="#e8b928" stroke-width="2"/></svg>
<svg class="ic" style="left:82.0px;top:77.0px" width="9" height="9" viewBox="0 0 16 16"><rect x="1.4" y="3" width="7" height="12" fill="#fff" stroke="#9c9b99" stroke-width="1"/><path d="M2.8 6H7M2.8 9H7" stroke="#e8b928" stroke-width="1.4"/><path d="M11.4 15 V6.4 H8.6 L12 1.2 L15.4 6.4 H12.8 V15Z" fill="#3f6fa8"/></svg>
<svg class="ic" style="left:97.5px;top:77.0px" width="9" height="9" viewBox="0 0 16 16"><circle cx="8" cy="8" r="7" fill="#6293c6" stroke="#3f6fa8" stroke-width="0.8"/><text x="8" y="12.4" font-family="Liberation Serif,serif" font-size="12" font-weight="bold" text-anchor="middle" fill="#fff">i</text></svg>
<div class="tree" style="left:31px;top:90px;width:162.6px;height:352.6px"></div>
<i class="ex" style="left:36.5px;top:93.8px"></i>
<svg class="ic" style="left:44.0px;top:91.8px" width="9" height="9" viewBox="0 0 16 16"><path d="M1 2.4 H6 L7.4 4.2 H15 V14.2 H1Z" fill="#dc4a2c" stroke="#c2401f" stroke-width="0.8"/><path d="M1 14.2 V7.4 L15 5.4 V14.2Z" fill="#ee8a4e"/><path d="M0.8 14.4 V10 L15.2 8.4 V14.4Z" fill="#f7c08e" opacity="0.7"/></svg>
<span class="ti" style="left:56.5px;top:90.9px">Home</span>
<svg class="ic" style="left:44.0px;top:102.3px" width="9" height="9" viewBox="0 0 16 16"><path d="M8 0.8 L10.2 5.8 15.6 6.4 11.6 10 12.8 15.4 8 12.6 3.2 15.4 4.4 10 0.4 6.4 5.8 5.8Z" fill="#f6f5f3" stroke="#9c9b99" stroke-width="1"/></svg>
<span class="ti" style="left:56.5px;top:101.4px">Favourites</span>
<i class="ex" style="left:36.5px;top:114.9px"></i>
<svg class="ic" style="left:44.0px;top:112.9px" width="9" height="9" viewBox="0 0 16 16"><path d="M1 2.4 H6 L7.4 4.2 H15 V14.2 H1Z" fill="#dc4a2c" stroke="#c2401f" stroke-width="0.8"/><path d="M1 14.2 V7.4 L15 5.4 V14.2Z" fill="#ee8a4e"/><path d="M0.8 14.4 V10 L15.2 8.4 V14.4Z" fill="#f7c08e" opacity="0.7"/></svg>
<span class="ti" style="left:56.5px;top:112.0px">/</span>
<svg class="ic" style="left:44.0px;top:123.4px" width="9" height="9" viewBox="0 0 16 16"><rect x="0.8" y="0.8" width="14.4" height="14.4" rx="2" fill="#5b8ec4" stroke="#3f6fa8" stroke-width="0.8"/><rect x="3" y="5" width="10" height="6" fill="#a9c6e6"/><text x="8" y="10.2" font-family="Liberation Sans,sans-serif" font-size="5" font-weight="bold" text-anchor="middle" fill="#fff">DB</text></svg>
<span class="ti" style="left:56.5px;top:122.5px">DB2</span>
<svg class="ic" style="left:44.0px;top:133.9px" width="9" height="9" viewBox="0 0 16 16"><path d="M1 1.4 Q9 1.4 15.4 6.6 Q9 7.4 6.4 11.4 L4.4 15 L3.4 8.6 Q3.6 5 1 1.4Z" fill="#3f6b9c" stroke="#2a4a70" stroke-width="0.6"/><path d="M3 3 Q8 4 12.6 6.4" stroke="#a9c3e0" stroke-width="0.8" fill="none"/></svg>
<span class="ti" style="left:56.5px;top:133.0px">MSSQL</span>
<svg class="ic" style="left:44.0px;top:144.4px" width="9" height="9" viewBox="0 0 16 16"><g transform="scale(1.12) translate(0.4 0.6)"><path d="M1.4 2.6 Q1.4 0.8 4 0.8 H10.4 Q13 0.8 13 3.2 V6.4 Q13 8.4 11.2 8.4 V11 H9 V8.6 H7.4 Q7.6 12 5.6 12.4 Q4.2 12.4 4.4 10.4 L4.8 8 Q1.4 7.6 1.4 4.8Z" fill="#3f6b9c" stroke="#2a4a70" stroke-width="0.7"/><path d="M5 3.4 Q7 5 9 3.4" fill="none" stroke="#a9c3e0" stroke-width="0.7"/><circle cx="4" cy="3.4" r="0.6" fill="#fff"/></g></svg>
<span class="ti" style="left:56.5px;top:143.5px">PostGIS</span>
<svg class="ic" style="left:44.0px;top:155.0px" width="9" height="9" viewBox="0 0 16 16"><g transform="translate(0.4 0)"><path d="M0.8 15 Q2 8 7 3.4 Q11 0.4 14.6 0.8 Q14.6 5 10 8.6 Q6.4 11.2 3 11.6 Z" fill="#c9d6e6" stroke="#3c5f88" stroke-width="1"/><path d="M0.8 15 Q5 8 13 2" fill="none" stroke="#3c5f88" stroke-width="0.8"/></g></svg>
<span class="ti" style="left:56.5px;top:154.1px">SpatiaLite</span>
<svg class="ic" style="left:44.0px;top:165.5px" width="9" height="9" viewBox="0 0 16 16"><circle cx="7.4" cy="7.4" r="6.6" fill="#e4ebf3" stroke="#3f6b9c" stroke-width="1"/><path d="M3 3.4 Q5 2 6.4 3.4 Q7.4 5 5.6 6 Q4.4 7.6 5.6 9.4 Q5.4 11.4 4 10.6 Q2 8.4 1.6 6Z M8.6 1.6 Q11 1.6 12.6 3.6 Q12 5.4 10.4 5 Q8.8 4.4 8.6 1.6Z M9 7.4 Q11.4 6.6 13.4 8.4 Q12.8 11.4 10.4 12.8 Q9 11 9.6 9.4Z" fill="#3f6b9c"/><rect x="6" y="1" width="4" height="4" fill="#4b9a45"/><path d="M2 13 L7 7" stroke="#333" stroke-width="1.2"/></svg>
<span class="ti" style="left:56.5px;top:164.6px">ArcGisFeatureServer</span>
<svg class="ic" style="left:44.0px;top:176.0px" width="9" height="9" viewBox="0 0 16 16"><circle cx="7.4" cy="7.4" r="6.6" fill="#cfdcea" stroke="#3f6b9c" stroke-width="1"/><path d="M3 3.4 Q5 2 6.4 3.4 Q7.4 5 5.6 6 Q4.4 7.6 5.6 9.4 Q5.4 11.4 4 10.6 Q2 8.4 1.6 6Z M8.6 1.6 Q11 1.6 12.6 3.6 Q12 5.4 10.4 5 Q8.8 4.4 8.6 1.6Z M9 7.4 Q11.4 6.6 13.4 8.4 Q12.8 11.4 10.4 12.8 Q9 11 9.6 9.4Z" fill="#3f6b9c"/><rect x="7" y="1.6" width="3.6" height="3.6" fill="#4b9a45"/><path d="M2.4 12.6 L7.4 7" stroke="#fff" stroke-width="1.2"/></svg>
<span class="ti" style="left:56.5px;top:175.1px">ArcGisMapServer</span>
<svg class="ic" style="left:44.0px;top:186.6px" width="9" height="9" viewBox="0 0 16 16"><circle cx="8" cy="8" r="6.8" fill="#f2f6fa" stroke="#9db8d6" stroke-width="1.1"/><path d="M1.2 8H14.8M8 1.2V14.8M2.6 4.4Q8 6.4 13.4 4.4M2.6 11.6Q8 9.6 13.4 11.6M8 1.2Q3.4 8 8 14.8M8 1.2Q12.6 8 8 14.8" fill="none" stroke="#9db8d6" stroke-width="0.7"/></svg>
<span class="ti" style="left:56.5px;top:185.7px">OWS</span>
<svg class="ic" style="left:44.0px;top:197.1px" width="9" height="9" viewBox="0 0 16 16"><circle cx="7.4" cy="7.4" r="6.6" fill="#e4ebf3" stroke="#4a7ab0" stroke-width="1"/><path d="M3 3.4 Q5 2 6.4 3.4 Q7.4 5 5.6 6 Q4.4 7.6 5.6 9.4 Q5.4 11.4 4 10.6 Q2 8.4 1.6 6Z M8.6 1.6 Q11 1.6 12.6 3.6 Q12 5.4 10.4 5 Q8.8 4.4 8.6 1.6Z M9 7.4 Q11.4 6.6 13.4 8.4 Q12.8 11.4 10.4 12.8 Q9 11 9.6 9.4Z" fill="#4a7ab0"/></svg>
<span class="ti" style="left:56.5px;top:196.2px">Tile Server (XYZ)</span>
<svg class="ic" style="left:44.0px;top:207.6px" width="9" height="9" viewBox="0 0 16 16"><circle cx="8" cy="8" r="6.8" fill="#2f5d92" stroke="#1f3f66" stroke-width="0.8"/><path d="M1.2 8H14.8M8 1.2V14.8M2.6 4.4Q8 6.4 13.4 4.4M2.6 11.6Q8 9.6 13.4 11.6M8 1.2Q3.4 8 8 14.8M8 1.2Q12.6 8 8 14.8" fill="none" stroke="#dbe6f2" stroke-width="0.9"/></svg>
<span class="ti" style="left:56.5px;top:206.7px">WCS</span>
<svg class="ic" style="left:44.0px;top:218.2px" width="9" height="9" viewBox="0 0 16 16"><circle cx="8" cy="8" r="6.8" fill="#eef3f8" stroke="#6f95bf" stroke-width="1.1"/><path d="M1.2 8H14.8M8 1.2Q3.4 8 8 14.8M8 1.2Q12.6 8 8 14.8" fill="none" stroke="#a9c3e0" stroke-width="0.7"/><path d="M4 4.4 L7.6 11.6 L10.2 4.8 L12.6 4.2" fill="none" stroke="#3c5f88" stroke-width="1.1"/></svg>
<span class="ti" style="left:56.5px;top:217.3px">WFS</span>
<svg class="ic" style="left:44.0px;top:228.7px" width="9" height="9" viewBox="0 0 16 16"><circle cx="7.4" cy="7.4" r="6.6" fill="#dfe8f2" stroke="#3f6b9c" stroke-width="1"/><path d="M3 3.4 Q5 2 6.4 3.4 Q7.4 5 5.6 6 Q4.4 7.6 5.6 9.4 Q5.4 11.4 4 10.6 Q2 8.4 1.6 6Z M8.6 1.6 Q11 1.6 12.6 3.6 Q12 5.4 10.4 5 Q8.8 4.4 8.6 1.6Z M9 7.4 Q11.4 6.6 13.4 8.4 Q12.8 11.4 10.4 12.8 Q9 11 9.6 9.4Z" fill="#3f6b9c"/></svg>
<span class="ti" style="left:56.5px;top:227.8px">WMS</span>
<div class="ptitle" style="left:32px;top:448.6px">Layers Panel</div>
<svg class="ic" style="left:176.2px;top:449.9px" width="6.6" height="6.6" viewBox="0 0 16 16"><rect x="1" y="1" width="14" height="14" rx="2.4" fill="#dbdad7" stroke="#b4b3b0" stroke-width="1.6"/><path d="M5 11 L11 5 M7.4 5 H11 V8.6" fill="none" stroke="#8f8e8b" stroke-width="1.5"/></svg>
<svg class="ic" style="left:185.7px;top:449.9px" width="6.6" height="6.6" viewBox="0 0 16 16"><rect x="1" y="1" width="14" height="14" rx="2.4" fill="#dbdad7" stroke="#a9a8a5" stroke-width="1.6"/><path d="M4.6 4.6 L11.4 11.4 M11.4 4.6 L4.6 11.4" stroke="#6a6966" stroke-width="2"/></svg>
<svg class="ic" style="left:35.0px;top:464.0px" width="9" height="9" viewBox="0 0 16 16"><path d="M9.4 6.2 L14.8 1.4 L15.6 2.4 L10.6 7.6Z" fill="#e59a3a" stroke="#b9701c" stroke-width="0.5"/><path d="M1 7.6 L9 5.2 L11.2 8.4 L4.6 14.2 Z" fill="#f3d64a" stroke="#c9a22a" stroke-width="0.5"/><path d="M1 7.6 L4 6.7 L7.6 11.6 L4.6 14.2Z" fill="#d8452e"/><path d="M5.4 6.3 L7.2 5.8 L10.4 9.1 L9 10.4Z" fill="#4a7ab5"/></svg>
<svg class="ic" style="left:50.5px;top:464.0px" width="9" height="9" viewBox="0 0 16 16"><path d="M7.4 1.2 L11.4 4.4 V13.4 H2.4 V6 L5.4 3.6 V13.4 M7.4 1.2 V13.4" fill="#f6f5f3" stroke="#8f8e8c" stroke-width="1"/><rect x="9.4" y="9.6" width="6.2" height="6.2" rx="0.6" fill="#4f9d4a"/><path d="M12.5 10.6V14.8M10.4 12.7H14.6" stroke="#fff" stroke-width="1.3"/></svg>
<svg class="ic" style="left:65.5px;top:464.0px" width="9" height="9" viewBox="0 0 16 16"><path d="M0.8 8.4 Q7 1.6 14.2 8.4 Q7 14.6 0.8 8.4Z" fill="#f4f3f1" stroke="#6a6a68" stroke-width="1"/><circle cx="7.6" cy="8.2" r="3" fill="#55738f"/><circle cx="7.6" cy="8.2" r="1.3" fill="#222"/><path d="M2 4.6 Q7 0.4 13 4.2" fill="none" stroke="#6a6a68" stroke-width="1"/></svg>
<svg class="ic" style="left:85.0px;top:464.0px" width="9" height="9" viewBox="0 0 16 16"><path d="M1 1.4 H15 L9.8 8 V14.6 L6.2 12.8 V8Z" fill="#6293c6" stroke="#3f6fa8" stroke-width="0.8"/><path d="M1 1.4H15" stroke="#e8b928" stroke-width="2"/></svg>
<svg class="ic" style="left:101.0px;top:464.0px" width="9" height="9" viewBox="0 0 16 16"><text x="5.4" y="11" font-family="DejaVu Serif,Liberation Serif,serif" font-size="13" text-anchor="middle" fill="#a9a8a6">Ɛ</text><rect x="9.2" y="9.2" width="5.6" height="5.6" fill="none" stroke="#b9b8b6" stroke-width="0.9"/></svg>
<svg class="ic" style="left:128.0px;top:464.0px" width="9" height="9" viewBox="0 0 16 16"><rect x="1.2" y="1" width="7.6" height="12" fill="#fff" stroke="#9c9b99" stroke-width="1"/><path d="M2.6 4H7.4M2.6 7H7.4" stroke="#e8b928" stroke-width="1.6"/><path d="M10.8 1 V9.6 H8 L11.8 15 L15.6 9.6 H13 V1Z" fill="#3f6fa8"/></svg>
<svg class="ic" style="left:143.5px;top:464.0px" width="9" height="9" viewBox="0 0 16 16"><rect x="1.2" y="3" width="7.6" height="12" fill="#fff" stroke="#9c9b99" stroke-width="1"/><path d="M2.6 6H7.4M2.6 9H7.4" stroke="#e8b928" stroke-width="1.6"/><path d="M10.8 15 V6.4 H8 L11.8 1 L15.6 6.4 H13 V15Z" fill="#3f6fa8"/></svg>
<svg class="ic" style="left:158.5px;top:464.0px" width="9" height="9" viewBox="0 0 16 16"><rect x="1" y="1.6" width="11.6" height="10.4" fill="#fff" stroke="#8a8987" stroke-width="1.2"/><rect x="9" y="10" width="6.6" height="5" rx="0.8" fill="#d63a2f"/><path d="M10.4 12.5H14.2" stroke="#fff" stroke-width="1.2"/></svg>
<i class="ar" style="left:75.0px;top:468.5px;border-top-color:#55534f"></i>
<i class="ar" style="left:116.0px;top:468.0px;border-top-color:#a9a8a6"></i>
<div class="tree" style="left:31px;top:478px;width:162.6px;height:138px"></div>
<div id="sel"></div>
<i class="cb" style="left:46.2px;top:480.5px"></i>
<svg class="ic" style="left:59.1px;top:480.4px" width="8.4" height="8.4" viewBox="0 0 16 16"><rect x="0.5" y="0.5" width="15" height="15" fill="#3a3030"/><rect x="5.5" y="0.5" width="5" height="5" fill="#9a8c8c"/><rect x="0.5" y="5.5" width="5" height="5" fill="#8a7c7c"/><rect x="10.5" y="5.5" width="5" height="5" fill="#b8aeb4"/><rect x="5.5" y="10.5" width="5" height="5" fill="#9a8e92"/><rect x="10.5" y="0.5" width="5" height="5" fill="#5a4c4c"/><rect x="0.5" y="10.5" width="5" height="5" fill="#4a3e3e"/></svg>
<span class="ti b" style="left:71px;top:479px"><u>Saint-Sulpice_transparent_m...</u></span>
<i class="exd" style="left:36px;top:494.5px"></i>
<i class="cb on" style="left:46.2px;top:492.5px"></i>
<svg class="ic" style="left:59.1px;top:492.5px" width="8.4" height="8.4" viewBox="0 0 16 16"><rect x="0.5" y="0.5" width="15" height="15" fill="#16243a"/><rect x="5.5" y="0.5" width="5" height="5" fill="#4d7fb8"/><rect x="0.5" y="5.5" width="5" height="5" fill="#3f73ae"/><rect x="10.5" y="5.5" width="5" height="5" fill="#8fb6e0"/><rect x="5.5" y="10.5" width="5" height="5" fill="#5d8fc6"/><rect x="5.5" y="5.5" width="5" height="5" fill="#1d3557"/><rect x="10.5" y="0.5" width="5" height="5" fill="#223b5c"/></svg>
<span class="ti b" style="left:71px;top:491.4px">Saint-Sulpice_dsm</span>
<i style="position:absolute;left:56px;top:503.5px;width:8px;height:8.5px;background:#000"></i>
<span class="ti" style="left:67.8px;top:503.1px">275.375</span>
<span class="ti" style="left:67.8px;top:513.4px">282.176</span>
<div id="canvas"></div>
<svg id="map" style="left:0;top:0" width="1024" height="634" viewBox="0 0 1024 634"><defs><clipPath id="mp"><polygon points="415,65 723.5,168.3 792,256 770.6,464 665.5,464.5 665.5,529 531,587.5 475,596 385,566 348,542 296,474 283,457 264.5,400 264.5,346.5"/></clipPath><linearGradient id="h0" gradientUnits="userSpaceOnUse" x1="250" y1="0" x2="810" y2="0"><stop offset="0" stop-color="#5c5c5c"/><stop offset="0.1429" stop-color="#686868"/><stop offset="0.2339" stop-color="#7a7a7a"/><stop offset="0.2804" stop-color="#828282"/><stop offset="0.325" stop-color="#8a8a8a"/><stop offset="0.4161" stop-color="#909090"/><stop offset="0.5071" stop-color="#909090"/><stop offset="0.5982" stop-color="#929292"/><stop offset="0.6893" stop-color="#929292"/><stop offset="0.7786" stop-color="#949494"/><stop offset="0.8696" stop-color="#969696"/><stop offset="1" stop-color="#989898"/></linearGradient><linearGradient id="h1" gradientUnits="userSpaceOnUse" x1="250" y1="0" x2="810" y2="0"><stop offset="0" stop-color="#5a5a5a"/><stop offset="0.1429" stop-color="#666666"/><stop offset="0.2339" stop-color="#787878"/><stop offset="0.2804" stop-color="#808080"/><stop offset="0.325" stop-color="#8a8a8a"/><stop offset="0.4161" stop-color="#8e8e8e"/><stop offset="0.5071" stop-color="#8e8e8e"/><stop offset="0.5982" stop-color="#909090"/><stop offset="0.6893" stop-color="#909090"/><stop offset="0.7786" stop-color="#929292"/><stop offset="0.8696" stop-color="#949494"/><stop offset="1" stop-color="#969696"/></linearGradient><linearGradient id="h2" gradientUnits="userSpaceOnUse" x1="250" y1="0" x2="810" y2="0"><stop offset="0" stop-color="#4c4c4c"/><stop offset="0.1429" stop-color="#5e5e5e"/><stop offset="0.2339" stop-color="#747474"/><stop offset="0.2804" stop-color="#7e7e7e"/><stop offset="0.325" stop-color="#868686"/><stop offset="0.4161" stop-color="#8c8c8c"/><stop offset="0.5071" stop-color="#888888"/><stop offset="0.5982" stop-color="#8c8c8c"/><stop offset="0.6893" stop-color="#8f8f8f"/><stop offset="0.7786" stop-color="#929292"/><stop offset="0.8696" stop-color="#959595"/><stop offset="1" stop-color="#979797"/></linearGradient><linearGradient id="h3" gradientUnits="userSpaceOnUse" x1="250" y1="0" x2="810" y2="0"><stop offset="0" stop-color="#464646"/><stop offset="0.1429" stop-color="#5a5a5a"/><stop offset="0.2036" stop-color="#6a6a6a"/><stop offset="0.2339" stop-color="#707070"/><stop offset="0.2804" stop-color="#787878"/><stop offset="0.325" stop-color="#7c7c7c"/><stop offset="0.3714" stop-color="#808080"/><stop offset="0.4161" stop-color="#838383"/><stop offset="0.4607" stop-color="#868686"/><stop offset="0.5071" stop-color="#888888"/><stop offset="0.5982" stop-color="#8a8a8a"/><stop offset="0.6893" stop-color="#8d8d8d"/><stop offset="0.7786" stop-color="#8f8f8f"/><stop offset="0.8696" stop-color="#939393"/><stop offset="1" stop-color="#969696"/></linearGradient><linearGradient id="h4" gradientUnits="userSpaceOnUse" x1="250" y1="0" x2="810" y2="0"><stop offset="0" stop-color="#383838"/><stop offset="0.1429" stop-color="#4c4c4c"/><stop offset="0.1661" stop-color="#525252"/><stop offset="0.2339" stop-color="#606060"/><stop offset="0.325" stop-color="#6c6c6c"/><stop offset="0.4161" stop-color="#757575"/><stop offset="0.5071" stop-color="#7c7c7c"/><stop offset="0.5982" stop-color="#818181"/><stop offset="0.6893" stop-color="#858585"/><stop offset="0.7786" stop-color="#888888"/><stop offset="0.8696" stop-color="#8e8e8e"/><stop offset="1" stop-color="#939393"/></linearGradient><linearGradient id="h5" gradientUnits="userSpaceOnUse" x1="250" y1="0" x2="810" y2="0"><stop offset="0" stop-color="#343434"/><stop offset="0.05357" stop-color="#3c3c3c"/><stop offset="0.1429" stop-color="#4a4a4a"/><stop offset="0.2339" stop-color="#565656"/><stop offset="0.325" stop-color="#616161"/><stop offset="0.4161" stop-color="#6b6b6b"/><stop offset="0.5071" stop-color="#747474"/><stop offset="0.5982" stop-color="#7a7a7a"/><stop offset="0.6893" stop-color="#7e7e7e"/><stop offset="0.7786" stop-color="#808080"/><stop offset="0.8696" stop-color="#838383"/><stop offset="0.9607" stop-color="#898989"/><stop offset="1" stop-color="#8b8b8b"/></linearGradient><linearGradient id="h6" gradientUnits="userSpaceOnUse" x1="250" y1="0" x2="810" y2="0"><stop offset="0" stop-color="#282828"/><stop offset="0.05357" stop-color="#2e2e2e"/><stop offset="0.1429" stop-color="#3a3a3a"/><stop offset="0.1893" stop-color="#424242"/><stop offset="0.2339" stop-color="#484848"/><stop offset="0.325" stop-color="#525252"/><stop offset="0.4161" stop-color="#5d5d5d"/><stop offset="0.5071" stop-color="#676767"/><stop offset="0.5982" stop-color="#707070"/><stop offset="0.6893" stop-color="#787878"/><stop offset="0.7786" stop-color="#7e7e7e"/><stop offset="0.8696" stop-color="#828282"/><stop offset="0.9607" stop-color="#868686"/><stop offset="1" stop-color="#888888"/></linearGradient><linearGradient id="h7" gradientUnits="userSpaceOnUse" x1="250" y1="0" x2="810" y2="0"><stop offset="0" stop-color="#1e1e1e"/><stop offset="0.05357" stop-color="#242424"/><stop offset="0.1429" stop-color="#363636"/><stop offset="0.1893" stop-color="#3e3e3e"/><stop offset="0.2339" stop-color="#404040"/><stop offset="0.325" stop-color="#4c4c4c"/><stop offset="0.4161" stop-color="#555555"/><stop offset="0.5071" stop-color="#5f5f5f"/><stop offset="0.5982" stop-color="#686868"/><stop offset="0.6893" stop-color="#717171"/><stop offset="0.7786" stop-color="#787878"/><stop offset="0.8696" stop-color="#7c7c7c"/><stop offset="0.9607" stop-color="#808080"/><stop offset="1" stop-color="#828282"/></linearGradient><linearGradient id="h8" gradientUnits="userSpaceOnUse" x1="250" y1="0" x2="810" y2="0"><stop offset="0" stop-color="#080808"/><stop offset="0.05357" stop-color="#0a0a0a"/><stop offset="0.1071" stop-color="#121212"/><stop offset="0.1429" stop-color="#1e1e1e"/><stop offset="0.1893" stop-color="#303030"/><stop offset="0.2339" stop-color="#363636"/><stop offset="0.2804" stop-color="#3c3c3c"/><stop offset="0.325" stop-color="#424242"/><stop offset="0.3714" stop-color="#474747"/><stop offset="0.4161" stop-color="#4b4b4b"/><stop offset="0.4607" stop-color="#4f4f4f"/><stop offset="0.5071" stop-color="#545454"/><stop offset="0.5518" stop-color="#585858"/><stop offset="0.5982" stop-color="#5c5c5c"/><stop offset="0.6429" stop-color="#616161"/><stop offset="0.6893" stop-color="#656565"/><stop offset="0.7339" stop-color="#696969"/><stop offset="0.7786" stop-color="#6c6c6c"/><stop offset="0.825" stop-color="#6e6e6e"/><stop offset="0.8696" stop-color="#6e6e6e"/><stop offset="0.9143" stop-color="#6c6c6c"/><stop offset="1" stop-color="#686868"/></linearGradient><linearGradient id="h9" gradientUnits="userSpaceOnUse" x1="250" y1="0" x2="810" y2="0"><stop offset="0" stop-color="#040404"/><stop offset="0.08929" stop-color="#0a0a0a"/><stop offset="0.1429" stop-color="#141414"/><stop offset="0.1893" stop-color="#242424"/><stop offset="0.2339" stop-color="#2c2c2c"/><stop offset="0.2804" stop-color="#333333"/><stop offset="0.325" stop-color="#393939"/><stop offset="0.3714" stop-color="#3f3f3f"/><stop offset="0.4161" stop-color="#444444"/><stop offset="0.4607" stop-color="#484848"/><stop offset="0.5071" stop-color="#4d4d4d"/><stop offset="0.5518" stop-color="#515151"/><stop offset="0.5982" stop-color="#545454"/><stop offset="0.6429" stop-color="#575757"/><stop offset="0.6893" stop-color="#595959"/><stop offset="0.725" stop-color="#5a5a5a"/><stop offset="0.7786" stop-color="#545454"/><stop offset="0.8696" stop-color="#505050"/><stop offset="1" stop-color="#4e4e4e"/></linearGradient><linearGradient id="h10" gradientUnits="userSpaceOnUse" x1="250" y1="0" x2="810" y2="0"><stop offset="0" stop-color="#020202"/><stop offset="0.1429" stop-color="#060606"/><stop offset="0.2339" stop-color="#141414"/><stop offset="0.325" stop-color="#242424"/><stop offset="0.3714" stop-color="#2f2f2f"/><stop offset="0.4161" stop-color="#393939"/><stop offset="0.4607" stop-color="#414141"/><stop offset="0.5071" stop-color="#474747"/><stop offset="0.5518" stop-color="#4a4a4a"/><stop offset="0.5982" stop-color="#4e4e4e"/><stop offset="0.6429" stop-color="#505050"/><stop offset="0.7054" stop-color="#4e4e4e"/><stop offset="0.7786" stop-color="#4e4e4e"/><stop offset="0.8696" stop-color="#4c4c4c"/><stop offset="1" stop-color="#4c4c4c"/></linearGradient><linearGradient id="h11" gradientUnits="userSpaceOnUse" x1="250" y1="0" x2="810" y2="0"><stop offset="0" stop-color="#000000"/><stop offset="0.1429" stop-color="#020202"/><stop offset="0.2339" stop-color="#0a0a0a"/><stop offset="0.325" stop-color="#181818"/><stop offset="0.4161" stop-color="#2c2c2c"/><stop offset="0.5071" stop-color="#3c3c3c"/><stop offset="0.5982" stop-color="#464646"/><stop offset="0.6893" stop-color="#4a4a4a"/><stop offset="0.7786" stop-color="#4a4a4a"/><stop offset="1" stop-color="#4a4a4a"/></linearGradient><linearGradient id="vg" x1="0" y1="0" x2="0" y2="1"><stop offset="0" stop-color="#000"/><stop offset="1" stop-color="#fff"/></linearGradient><mask id="vm" maskContentUnits="objectBoundingBox"><rect width="1" height="1" fill="url(#vg)"/></mask><linearGradient id="dk" gradientUnits="userSpaceOnUse" x1="450.3" y1="499.1" x2="417.8" y2="588.4"><stop offset="0.000" stop-color="#000" stop-opacity="0"/><stop offset="0.137" stop-color="#000" stop-opacity="0"/><stop offset="0.368" stop-color="#000" stop-opacity="0.38"/><stop offset="0.579" stop-color="#000" stop-opacity="0.68"/><stop offset="0.811" stop-color="#000" stop-opacity="0.8"/><stop offset="1.000" stop-color="#000" stop-opacity="0.84"/></linearGradient><filter id="b05" x="-30%" y="-30%" width="160%" height="160%"><feGaussianBlur stdDeviation="0.5"/></filter><filter id="b1" x="-30%" y="-30%" width="160%" height="160%"><feGaussianBlur stdDeviation="1"/></filter><filter id="b2" x="-30%" y="-30%" width="160%" height="160%"><feGaussianBlur stdDeviation="2.5"/></filter><filter id="b4" x="-30%" y="-30%" width="160%" height="160%"><feGaussianBlur stdDeviation="4"/></filter></defs><g clip-path="url(#mp)"><rect x="250" y="55" width="560" height="25" fill="url(#h0)"/><rect x="250" y="55" width="560" height="25" fill="url(#h1)" mask="url(#vm)"/><rect x="250" y="80" width="560" height="40" fill="url(#h1)"/><rect x="250" y="80" width="560" height="40" fill="url(#h2)" mask="url(#vm)"/><rect x="250" y="120" width="560" height="40" fill="url(#h2)"/><rect x="250" y="120" width="560" height="40" fill="url(#h3)" mask="url(#vm)"/><rect x="250" y="160" width="560" height="40" fill="url(#h3)"/><rect x="250" y="160" width="560" height="40" fill="url(#h4)" mask="url(#vm)"/><rect x="250" y="200" width="560" height="50" fill="url(#h4)"/><rect x="250" y="200" width="560" height="50" fill="url(#h5)" mask="url(#vm)"/><rect x="250" y="250" width="560" height="50" fill="url(#h5)"/><rect x="250" y="250" width="560" height="50" fill="url(#h6)" mask="url(#vm)"/><rect x="250" y="300" width="560" height="60" fill="url(#h6)"/><rect x="250" y="300" width="560" height="60" fill="url(#h7)" mask="url(#vm)"/><rect x="250" y="360" width="560" height="60" fill="url(#h7)"/><rect x="250" y="360" width="560" height="60" fill="url(#h8)" mask="url(#vm)"/><rect x="250" y="420" width="560" height="60" fill="url(#h8)"/><rect x="250" y="420" width="560" height="60" fill="url(#h9)" mask="url(#vm)"/><rect x="250" y="480" width="560" height="60" fill="url(#h9)"/><rect x="250" y="480" width="560" height="60" fill="url(#h10)" mask="url(#vm)"/><rect x="250" y="540" width="560" height="75" fill="url(#h10)"/><rect x="250" y="540" width="560" height="75" fill="url(#h11)" mask="url(#vm)"/><polygon points="415,65 426,69 404,115 381,183 371,300 354,450 349,480 300,490 255,400 255,346" fill="#000" opacity="0.05" filter="url(#b1)"/><linearGradient id="bg2" gradientUnits="userSpaceOnUse" x1="0" y1="240" x2="0" y2="420"><stop offset="0" stop-color="#000" stop-opacity="0"/><stop offset="1" stop-color="#000" stop-opacity="0.34"/></linearGradient><polygon points="376,240 371,300 355,450 350,480 350,540 330,580 240,580 240,300 330,240" fill="url(#bg2)" filter="url(#b05)"/><polygon points="240,418 547,530 543,640 240,640" fill="url(#dk)" filter="url(#b2)"/><clipPath id="fp"><polygon points="430,80 700,170 731,250 750,299 754,315 744,327 741,337 719,365 708,384 690,403 678,428 656,444 626,483 605,507 583,520 538,534 350,470 354,450 371,300 381,183 404,115"/></clipPath><g opacity="0.28" clip-path="url(#fp)"><line x1="230" y1="-36" x2="991" y2="319" stroke="#000" stroke-width="4.0" opacity="0.03"/><line x1="227" y1="-29" x2="988" y2="326" stroke="#fff" stroke-width="2.8" opacity="0.05"/><line x1="225" y1="-25" x2="986" y2="330" stroke="#000" stroke-width="2.8" opacity="0.05"/><line x1="223" y1="-21" x2="984" y2="334" stroke="#fff" stroke-width="4.5" opacity="0.02"/><line x1="221" y1="-16" x2="982" y2="339" stroke="#000" stroke-width="4.4" opacity="0.06"/><line x1="218" y1="-10" x2="979" y2="345" stroke="#fff" stroke-width="3.5" opacity="0.05"/><line x1="215" y1="-3" x2="976" y2="352" stroke="#000" stroke-width="5.1" opacity="0.04"/><line x1="210" y1="6" x2="972" y2="361" stroke="#fff" stroke-width="2.7" opacity="0.06"/><line x1="208" y1="11" x2="970" y2="366" stroke="#000" stroke-width="3.1" opacity="0.03"/><line x1="206" y1="15" x2="967" y2="370" stroke="#fff" stroke-width="6.2" opacity="0.03"/><line x1="202" y1="24" x2="963" y2="379" stroke="#000" stroke-width="5.4" opacity="0.04"/><line x1="198" y1="32" x2="960" y2="387" stroke="#fff" stroke-width="2.8" opacity="0.02"/><line x1="196" y1="36" x2="958" y2="391" stroke="#000" stroke-width="5.6" opacity="0.04"/><line x1="193" y1="43" x2="954" y2="398" stroke="#fff" stroke-width="5.1" opacity="0.04"/><line x1="190" y1="50" x2="951" y2="405" stroke="#000" stroke-width="6.1" opacity="0.05"/><line x1="187" y1="57" x2="948" y2="412" stroke="#fff" stroke-width="5.1" opacity="0.05"/><line x1="183" y1="66" x2="944" y2="421" stroke="#000" stroke-width="5.8" opacity="0.03"/><line x1="178" y1="75" x2="939" y2="430" stroke="#fff" stroke-width="3.0" opacity="0.04"/><line x1="175" y1="82" x2="936" y2="437" stroke="#000" stroke-width="3.2" opacity="0.04"/><line x1="173" y1="86" x2="934" y2="441" stroke="#fff" stroke-width="5.5" opacity="0.06"/><line x1="169" y1="94" x2="931" y2="449" stroke="#000" stroke-width="6.4" opacity="0.04"/><line x1="165" y1="103" x2="926" y2="458" stroke="#fff" stroke-width="5.2" opacity="0.05"/><line x1="162" y1="110" x2="923" y2="465" stroke="#000" stroke-width="6.3" opacity="0.07"/><line x1="158" y1="119" x2="919" y2="474" stroke="#fff" stroke-width="5.5" opacity="0.02"/><line x1="154" y1="127" x2="915" y2="482" stroke="#000" stroke-width="5.4" opacity="0.07"/><line x1="150" y1="136" x2="911" y2="491" stroke="#fff" stroke-width="3.8" opacity="0.04"/><line x1="147" y1="143" x2="908" y2="498" stroke="#000" stroke-width="2.6" opacity="0.04"/><line x1="145" y1="146" x2="906" y2="501" stroke="#fff" stroke-width="3.0" opacity="0.02"/><line x1="142" y1="153" x2="903" y2="508" stroke="#000" stroke-width="3.1" opacity="0.03"/><line x1="140" y1="158" x2="901" y2="513" stroke="#fff" stroke-width="6.4" opacity="0.02"/><line x1="136" y1="166" x2="897" y2="521" stroke="#000" stroke-width="5.0" opacity="0.06"/><line x1="132" y1="175" x2="893" y2="530" stroke="#fff" stroke-width="6.4" opacity="0.03"/><line x1="128" y1="183" x2="889" y2="538" stroke="#000" stroke-width="4.1" opacity="0.06"/><line x1="124" y1="191" x2="885" y2="546" stroke="#fff" stroke-width="3.2" opacity="0.03"/><line x1="122" y1="196" x2="883" y2="551" stroke="#000" stroke-width="3.6" opacity="0.04"/><line x1="119" y1="202" x2="880" y2="557" stroke="#fff" stroke-width="3.7" opacity="0.02"/><line x1="116" y1="208" x2="878" y2="563" stroke="#000" stroke-width="4.2" opacity="0.05"/><line x1="113" y1="216" x2="874" y2="571" stroke="#fff" stroke-width="5.6" opacity="0.05"/><line x1="109" y1="224" x2="870" y2="579" stroke="#000" stroke-width="5.5" opacity="0.02"/><line x1="104" y1="233" x2="866" y2="588" stroke="#fff" stroke-width="6.0" opacity="0.06"/><line x1="100" y1="242" x2="861" y2="597" stroke="#000" stroke-width="4.3" opacity="0.04"/><line x1="98" y1="248" x2="859" y2="603" stroke="#fff" stroke-width="5.4" opacity="0.02"/><line x1="95" y1="254" x2="856" y2="609" stroke="#000" stroke-width="3.4" opacity="0.03"/><line x1="92" y1="259" x2="854" y2="614" stroke="#fff" stroke-width="2.7" opacity="0.02"/><line x1="91" y1="263" x2="852" y2="618" stroke="#000" stroke-width="3.0" opacity="0.04"/><line x1="89" y1="266" x2="850" y2="621" stroke="#fff" stroke-width="6.4" opacity="0.05"/><line x1="86" y1="274" x2="847" y2="629" stroke="#000" stroke-width="3.6" opacity="0.04"/><line x1="83" y1="279" x2="844" y2="634" stroke="#fff" stroke-width="3.1" opacity="0.06"/><line x1="80" y1="287" x2="841" y2="642" stroke="#000" stroke-width="4.6" opacity="0.04"/><line x1="77" y1="292" x2="838" y2="647" stroke="#fff" stroke-width="3.0" opacity="0.04"/><line x1="75" y1="296" x2="836" y2="651" stroke="#000" stroke-width="6.2" opacity="0.03"/><line x1="72" y1="303" x2="833" y2="658" stroke="#fff" stroke-width="6.8" opacity="0.05"/><line x1="68" y1="311" x2="830" y2="666" stroke="#000" stroke-width="4.9" opacity="0.02"/><line x1="65" y1="318" x2="826" y2="673" stroke="#fff" stroke-width="6.9" opacity="0.06"/><line x1="60" y1="328" x2="822" y2="683" stroke="#000" stroke-width="3.7" opacity="0.04"/><line x1="58" y1="332" x2="819" y2="687" stroke="#fff" stroke-width="6.0" opacity="0.05"/><line x1="54" y1="342" x2="815" y2="697" stroke="#000" stroke-width="4.0" opacity="0.03"/><line x1="50" y1="349" x2="812" y2="704" stroke="#fff" stroke-width="6.9" opacity="0.06"/><line x1="46" y1="359" x2="807" y2="714" stroke="#000" stroke-width="6.2" opacity="0.06"/><line x1="42" y1="367" x2="804" y2="722" stroke="#fff" stroke-width="4.8" opacity="0.04"/><line x1="40" y1="372" x2="801" y2="727" stroke="#000" stroke-width="2.6" opacity="0.03"/><line x1="38" y1="376" x2="799" y2="731" stroke="#fff" stroke-width="5.6" opacity="0.07"/><line x1="34" y1="384" x2="796" y2="739" stroke="#000" stroke-width="6.7" opacity="0.07"/><line x1="29" y1="394" x2="791" y2="749" stroke="#fff" stroke-width="4.1" opacity="0.03"/><line x1="27" y1="400" x2="788" y2="755" stroke="#000" stroke-width="3.4" opacity="0.03"/><line x1="24" y1="406" x2="785" y2="761" stroke="#fff" stroke-width="6.6" opacity="0.06"/><line x1="20" y1="415" x2="781" y2="770" stroke="#000" stroke-width="5.4" opacity="0.06"/><line x1="17" y1="421" x2="778" y2="776" stroke="#fff" stroke-width="5.5" opacity="0.07"/><line x1="13" y1="429" x2="774" y2="784" stroke="#000" stroke-width="5.9" opacity="0.04"/><line x1="10" y1="436" x2="771" y2="791" stroke="#fff" stroke-width="6.1" opacity="0.04"/><line x1="5" y1="446" x2="767" y2="801" stroke="#000" stroke-width="6.9" opacity="0.04"/></g><g filter="url(#b05)"><polygon points="750.2,300.8 757,303 790,318 782,375 779.5,386 741,336.8 744,327 753.6,314.7" fill="#6b6b6b"/><polygon points="752,300 790,314 788,334 762,314" fill="#808080" opacity="0.7" filter="url(#b2)"/><polygon points="741,336.8 778.8,374.7 777.3,387.3 718.9,365.2" fill="#7f7f7f"/><polygon points="718.9,365.2 777.3,387.3 775.7,406.2 707.8,384" fill="#787878"/><polygon points="707.8,384 775.7,406.2 774.1,422 690.5,403" fill="#696969"/><polygon points="690.5,403 774.1,422 772.5,444 687.3,409.4" fill="#606060"/><polygon points="687.3,409.4 772.5,444 771,456.7 677.9,428.3" fill="#555555"/><polygon points="677.9,428.3 771,456.7 771,466 664,466 655.8,444 665.2,437.8" fill="#4a4a4a"/><polygon points="537.8,534 548.5,531.2 583.4,520.5 605,507 626.4,483 655.8,444 667,444 667,530 531,589 541,560" fill="#4d4d4d"/><polygon points="626.4,483 655.8,444 667,450 667,500 640,522" fill="#575757"/><polygon points="538,536 558,542 572,568 531,589 541,560" fill="#3a3a3a" opacity="0.8" filter="url(#b1)"/><polygon points="583.4,520.5 605,507 620,545 600,556" fill="#4a4a4a"/><polygon points="723.5,168.3 712.9,197.4 735,203 754.8,208.4" fill="#9c9c9c"/><polygon points="723.5,168.3 717,192 731,199" fill="#a6a6a6"/><polygon points="684,154 723.5,168.3 716,184 700,170 690,172" fill="#969696"/><polygon points="754.8,208.4 792,256 783,258 760,226" fill="#969696"/></g><ellipse cx="705" cy="215" rx="14" ry="8" fill="#000" opacity="0.09" filter="url(#b2)"/><ellipse cx="716" cy="236" rx="12" ry="10" fill="#000" opacity="0.09" filter="url(#b2)"/><ellipse cx="700" cy="246" rx="9" ry="7" fill="#000" opacity="0.09" filter="url(#b2)"/><ellipse cx="728" cy="250" rx="8" ry="9" fill="#000" opacity="0.09" filter="url(#b2)"/><ellipse cx="690" cy="200" rx="8" ry="5" fill="#000" opacity="0.09" filter="url(#b2)"/><g filter="url(#b05)"><ellipse cx="451.3" cy="221.5" rx="2.125" ry="1.7" fill="#a8a8a8"/><ellipse cx="458.5" cy="224.2" rx="1.87" ry="3.06" fill="#a8a8a8" transform="rotate(-30 458.5 224.2)"/><ellipse cx="467.3" cy="229.1" rx="3.23" ry="2.21" fill="#a8a8a8" transform="rotate(20 467.3 229.1)"/><ellipse cx="447.2" cy="234.5" rx="3.4" ry="2.72" fill="#4c4c4c" transform="rotate(-20 447.2 234.5)"/><ellipse cx="458.5" cy="239" rx="2.125" ry="1.7" fill="#4c4c4c"/><ellipse cx="466.7" cy="245.5" rx="3.4" ry="1.53" fill="#4c4c4c" transform="rotate(-10 466.7 245.5)"/><ellipse cx="440.6" cy="266" rx="2.125" ry="1.7" fill="#b4b4b4"/><ellipse cx="444.1" cy="277.5" rx="5.1" ry="2.21" fill="#b4b4b4" transform="rotate(25 444.1 277.5)"/><ellipse cx="441" cy="263.6" rx="1.275" ry="1.275" fill="#333"/><ellipse cx="442" cy="273.5" rx="1.275" ry="1.275" fill="#aaa"/><ellipse cx="478" cy="274.9" rx="7.65" ry="3.91" fill="#464646" transform="rotate(15 478 274.9)"/><ellipse cx="492.3" cy="284.5" rx="6.8" ry="3.91" fill="#484848" transform="rotate(10 492.3 284.5)"/><ellipse cx="483" cy="288.8" rx="1.275" ry="1.275" fill="#484848"/><ellipse cx="480.4" cy="299" rx="2.125" ry="1.7" fill="#3c3c3c"/><ellipse cx="489.2" cy="301" rx="3.06" ry="2.21" fill="#444" transform="rotate(30 489.2 301)"/><ellipse cx="502" cy="306.7" rx="1.7" ry="1.19" fill="#111" transform="rotate(25 502 306.7)"/><ellipse cx="465.6" cy="288.6" rx="2.55" ry="1.53" fill="#909090" transform="rotate(25 465.6 288.6)"/><ellipse cx="504.6" cy="287.8" rx="1.7" ry="1.19" fill="#909090"/><ellipse cx="427.3" cy="283.7" rx="0.85" ry="1.275" fill="#333"/><ellipse cx="522.7" cy="257.8" rx="1.275" ry="1.87" fill="#111" transform="rotate(-30 522.7 257.8)"/><ellipse cx="546" cy="265.6" rx="2.55" ry="1.7" fill="#1c1c1c" transform="rotate(30 546 265.6)"/><ellipse cx="554.3" cy="271.4" rx="2.55" ry="1.53" fill="#222" transform="rotate(20 554.3 271.4)"/><ellipse cx="548.1" cy="273.4" rx="2.21" ry="1.53" fill="#3c3c3c"/><ellipse cx="551.9" cy="320.1" rx="0.85" ry="0.85" fill="#222"/><ellipse cx="594.8" cy="316.8" rx="1.7" ry="0.85" fill="#b0b0b0" transform="rotate(20 594.8 316.8)"/><ellipse cx="559" cy="343" rx="3.4" ry="1.53" fill="#bcbcbc" transform="rotate(25 559 343)"/><ellipse cx="570" cy="351" rx="5.525" ry="1.19" fill="#b8b8b8" transform="rotate(25 570 351)"/><ellipse cx="556.4" cy="358.5" rx="1.275" ry="1.02" fill="#222"/><ellipse cx="562.6" cy="360.5" rx="1.02" ry="0.85" fill="#333"/><ellipse cx="583.7" cy="357.8" rx="1.275" ry="1.02" fill="#222"/><ellipse cx="591.7" cy="359.9" rx="2.55" ry="1.105" fill="#111" transform="rotate(25 591.7 359.9)"/><ellipse cx="577.5" cy="330.4" rx="0.85" ry="0.85" fill="#333"/><ellipse cx="609.7" cy="373.4" rx="2.125" ry="1.19" fill="#333" transform="rotate(20 609.7 373.4)"/><ellipse cx="633.3" cy="364" rx="1.275" ry="0.85" fill="#444"/><ellipse cx="647.7" cy="353.7" rx="0.85" ry="0.85" fill="#333"/><ellipse cx="639" cy="385.5" rx="2.55" ry="2.89" fill="#2e2e2e"/><ellipse cx="642" cy="389.5" rx="2.21" ry="2.21" fill="#2a2a2a"/><ellipse cx="651.8" cy="377" rx="3.06" ry="2.55" fill="#5c5c5c" transform="rotate(20 651.8 377)"/><ellipse cx="655.9" cy="381.5" rx="1.02" ry="2.21" fill="#585858" transform="rotate(-20 655.9 381.5)"/><ellipse cx="635.8" cy="423.7" rx="1.7" ry="1.275" fill="#e0e0e0"/><ellipse cx="474.8" cy="428.7" rx="1.02" ry="1.02" fill="#0c0c0c"/><ellipse cx="481.7" cy="423.8" rx="0.85" ry="0.85" fill="#141414"/><ellipse cx="457" cy="394.5" rx="2.04" ry="0.68" fill="#101010" transform="rotate(25 457 394.5)"/><ellipse cx="444.5" cy="411" rx="0.85" ry="0.85" fill="#1a1a1a"/><ellipse cx="591.7" cy="438.6" rx="0.765" ry="0.765" fill="#b0b0b0"/><ellipse cx="597.4" cy="442.8" rx="0.935" ry="0.935" fill="#b8b8b8"/><ellipse cx="607.7" cy="449" rx="1.87" ry="1.36" fill="#b4b4b4" transform="rotate(30 607.7 449)"/><ellipse cx="514.5" cy="392" rx="0.68" ry="0.68" fill="#909090"/><ellipse cx="527.5" cy="478.5" rx="3.74" ry="0.765" fill="#0a0a0a" transform="rotate(25 527.5 478.5)"/><ellipse cx="529.5" cy="484" rx="2.55" ry="1.7" fill="#0c0c0c" transform="rotate(25 529.5 484)"/><ellipse cx="523.5" cy="480" rx="1.36" ry="0.68" fill="#111" transform="rotate(25 523.5 480)"/><ellipse cx="531.5" cy="486.5" rx="1.7" ry="1.19" fill="#0c0c0c"/></g><ellipse cx="432" cy="400" rx="8" ry="5" fill="#000" transform="rotate(20 432 400)" opacity="0.16" filter="url(#b1)"/><ellipse cx="440" cy="420" rx="9" ry="8" fill="#000" transform="rotate(20 440 420)" opacity="0.2" filter="url(#b1)"/><ellipse cx="436" cy="436" rx="6" ry="5" fill="#000" transform="rotate(20 436 436)" opacity="0.14" filter="url(#b1)"/><ellipse cx="405" cy="452" rx="9" ry="5" fill="#000" transform="rotate(20 405 452)" opacity="0.1" filter="url(#b1)"/><ellipse cx="424" cy="446" rx="7" ry="4" fill="#000" transform="rotate(20 424 446)" opacity="0.1" filter="url(#b1)"/><ellipse cx="404" cy="383" rx="4" ry="3" fill="#000" transform="rotate(20 404 383)" opacity="0.12" filter="url(#b1)"/><ellipse cx="499.5" cy="239" rx="6" ry="6" fill="#000" transform="rotate(20 499.5 239)" opacity="0.12" filter="url(#b1)"/><ellipse cx="510.8" cy="242" rx="6" ry="2.5" fill="#000" transform="rotate(20 510.8 242)" opacity="0.1" filter="url(#b1)"/><ellipse cx="521" cy="256.4" rx="12" ry="6" fill="#000" transform="rotate(20 521 256.4)" opacity="0.07" filter="url(#b1)"/><ellipse cx="533.3" cy="259.5" rx="10" ry="7" fill="#000" transform="rotate(20 533.3 259.5)" opacity="0.08" filter="url(#b1)"/><ellipse cx="713" cy="233" rx="8" ry="6" fill="#000" transform="rotate(20 713 233)" opacity="0.05" filter="url(#b1)"/><g filter="url(#b05)"><polygon points="316,252 329,252 327,300 325,345 322,358 300,360 255,360 255,346 294,290" fill="#9a9a9a"/><polygon points="314,253 330,252.5 330,260 310,261" fill="#b6b6b6"/><polygon points="306,261 328,260 328,266 303,266.5" fill="#6a6a6a"/><polygon points="300,266 328,266 327,275 297,276" fill="#ababab"/><polygon points="296,276 327,275 326,292 322,300 294,290" fill="#949494"/><polygon points="290,289.5 296,289.5 320,300 326,306 318,310 288,300" fill="#fff"/><polygon points="286,301 312,308 318,316 282,314" fill="#bdbdbd"/><polygon points="280,313 323,310.5 324,316 300,319 283,316" fill="#f4f4f4"/><polygon points="282,316 300,319 322,317 325,345 296,345 288,330" fill="#d2d2d2"/><polygon points="280.6,315.7 264.2,345.5 277.7,357.5 287.7,330" fill="#b2b2b2"/><polygon points="287.7,330 293.4,345.5 277.7,357.5" fill="#d4d4d4"/><polygon points="292,330.6 304.7,338.4 304,344.8 294.8,340.5" fill="#303030"/></g><g filter="url(#b1)"><polygon points="293,343 304,345 312,336 322,338 324,356 310,358 300,356 294,358 286,362 281,357 288,348" fill="#fff"/><ellipse cx="319" cy="322" rx="5" ry="12" fill="#fff"/><polygon points="315,302 325.5,305 326.5,330 325,357 314,357 318,335" fill="#f6f6f6"/><polygon points="318,312 326,313 326,316 318,316" fill="#3a3a3a"/><ellipse cx="316" cy="305" rx="5" ry="4" fill="#fff"/></g><polygon points="260,346.2 264.2,346.2 277.7,357.6 283.4,364 289,366.8 291,372.5 276.3,374.6 269.2,378.2 260,377.5" fill="#000" filter="url(#b05)"/><polygon points="289,360 300,357 325,356 325,376 305,380 291,373" fill="#303030" opacity="0.9" filter="url(#b1)"/><g filter="url(#b1)"><polygon points="255,377.5 269,378 277,374.5 291,373 304,380 304.7,388.5 317.5,394.2 313.2,395.6 301.9,401.3 289,405.6 287.7,412.7 292,418.4 301.9,421.2 302.6,426.9 307.6,429.7 304.7,439.7 300.5,453.9 294.8,465.2 288,472 255,472" fill="#fff"/></g><polygon points="301.9,401.3 313.2,395.6 314,415.5 303,421.5 292,418.4 287.7,412.7 289,405.6" fill="#505050" filter="url(#b1)"/><polygon points="288,389 302,391 303,398 290,399" fill="#cfcfcf" filter="url(#b1)"/><polygon points="283.4,456.7 297.6,459.5 290.5,469" fill="#909090" filter="url(#b05)"/><ellipse cx="309" cy="378" rx="1.6" ry="1.6" fill="#e8e8e8"/><ellipse cx="312" cy="384" rx="1.6" ry="1.6" fill="#e8e8e8"/><ellipse cx="314.7" cy="395" rx="1.6" ry="1.6" fill="#e8e8e8"/><ellipse cx="269" cy="432.6" rx="1.6" ry="1.6" fill="#e8e8e8"/><g filter="url(#b05)"><ellipse cx="601.5" cy="162" rx="8" ry="9" fill="#a9a9a9" transform="rotate(30 601.5 162)"/><ellipse cx="607" cy="158.5" rx="5" ry="4" fill="#a4a4a4"/></g><polygon points="615.5,158.2 670.4,193.8 647.6,223.6 598.2,183.4" fill="#d4d4d4" stroke="#d4d4d4" stroke-width="1.6" stroke-linejoin="round" filter="url(#b05)"/><polygon points="618.6,162.4 669,194.2 647.8,222.2 602.8,184.4" fill="#fff" stroke="#fff" stroke-width="1.2" stroke-linejoin="round" filter="url(#b05)"/><g></g><ellipse cx="584.5" cy="185" rx="3" ry="2.6" fill="#a0a0a0"/><polygon points="589,191 595,189 604,198 600,203 592,198" fill="#9a9a9a" filter="url(#b05)"/><polygon points="607,205 613,203 621,212 618,219 609,214" fill="#969696" filter="url(#b05)"/><g fill="#fff" filter="url(#b05)"><ellipse cx="579" cy="199" rx="2" ry="5" fill="#fff" transform="rotate(-20 579 199)"/><ellipse cx="583" cy="203" rx="3" ry="3" fill="#fff"/><ellipse cx="578" cy="207" rx="3" ry="2" fill="#fff"/><ellipse cx="586" cy="207" rx="2.5" ry="2.5" fill="#fff"/><ellipse cx="588.5" cy="199" rx="1.2" ry="1.8" fill="#fff"/><ellipse cx="590" cy="204" rx="1.2" ry="1.2" fill="#fff"/><ellipse cx="600.5" cy="209" rx="2" ry="4" fill="#fff" transform="rotate(-15 600.5 209)"/><ellipse cx="603" cy="215" rx="3" ry="2.5" fill="#fff" transform="rotate(20 603 215)"/><ellipse cx="601" cy="220" rx="1.5" ry="3" fill="#fff"/><ellipse cx="606" cy="221" rx="1.5" ry="2.5" fill="#fff" transform="rotate(20 606 221)"/><ellipse cx="598" cy="213" rx="1.5" ry="1.5" fill="#fff"/><ellipse cx="600" cy="226" rx="1" ry="1" fill="#fff"/><ellipse cx="625" cy="226" rx="3.5" ry="6" fill="#fff" transform="rotate(-25 625 226)"/><ellipse cx="630" cy="231" rx="5" ry="4" fill="#fff" transform="rotate(10 630 231)"/><ellipse cx="624" cy="235" rx="3" ry="4" fill="#fff" transform="rotate(30 624 235)"/><ellipse cx="634" cy="226" rx="2" ry="3" fill="#fff" transform="rotate(20 634 226)"/><ellipse cx="619" cy="231" rx="1.5" ry="2" fill="#fff"/><ellipse cx="620" cy="240" rx="1.2" ry="2" fill="#fff"/><ellipse cx="631" cy="239" rx="2" ry="2.5" fill="#fff"/><ellipse cx="617" cy="226" rx="1" ry="1" fill="#fff"/><ellipse cx="636" cy="235" rx="1.5" ry="1.5" fill="#fff"/></g><ellipse cx="684.9" cy="250.4" rx="1" ry="1" fill="#fff"/></g><polyline points="264.5,379 264.5,400 283,457 292,469" stroke="#fff" stroke-width="2.6" fill="none"/></svg>
<div id="tip">Cut Features</div>
<div id="status"></div>
<span class="st" style="left:421.5px;top:620px">Coordinate</span>
<div class="inp" style="left:465px;top:619.3px;width:121px;text-align:center">311646.7,5153805.6</div>
<svg class="ic" style="left:587.5px;top:620.4px" width="10" height="10" viewBox="0 0 16 16"><path d="M2 3 L11 1 L13 9 Q9 14 4 12Z" fill="#8a8987" stroke="#55534f" stroke-width="0.9"/><path d="M6 2 L7.4 7.6 M3 8 L12.6 6" stroke="#f2f1f0" stroke-width="0.9"/><path d="M11 10 Q14.6 12 13 15.4" fill="none" stroke="#55534f" stroke-width="1.2"/></svg>
<span class="st" style="left:604.3px;top:620px;letter-spacing:-0.2px">Scale</span>
<div class="inp" style="left:626px;top:619.3px;width:64.2px;padding-left:3.5px">1:413</div>
<i style="position:absolute;left:676px;top:620.3px;width:1px;height:11.4px;background:#dcdad6"></i>
<i class="ar" style="left:681.5px;top:625.0px;border-top-color:#55534f"></i>
<svg class="ic" style="left:692.4px;top:620.4px" width="9.6" height="9.6" viewBox="0 0 16 16"><path d="M4.4 7.4 V4.8 Q4.4 1.4 8 1.4 Q11.6 1.4 11.6 4.8 V7.4" fill="none" stroke="#6a6966" stroke-width="1.8"/><rect x="2.4" y="7.2" width="11.2" height="8" rx="1" fill="#6a6966"/></svg>
<span class="st" style="left:708.5px;top:620px">Magnifier</span>
<div class="inp" style="left:747px;top:619.3px;width:48px;padding-left:3.5px">100%</div>
<span class="st" style="left:801.5px;top:620px">Rotation</span>
<div class="inp" style="left:839.5px;top:619.3px;width:48px;padding-left:3.5px">0.0</div>
<i class="su" style="left:789.5px;top:622px"></i><i class="sd" style="left:789.5px;top:628.5px"></i>
<i class="su" style="left:882.5px;top:622px"></i><i class="sd" style="left:882.5px;top:628.5px"></i>
<i class="cb on" style="left:895px;top:621.5px"></i>
<span class="st" style="left:907px;top:620px">Render</span>
<svg class="ic" style="left:943.7px;top:621.5px" width="8.6" height="8.6" viewBox="0 0 16 16"><circle cx="8" cy="8" r="6.4" fill="#8f8e8c" stroke="#5f5e5c" stroke-width="1.8"/><path d="M8 0.6V15.4M0.6 8H15.4" stroke="#e9e8e6" stroke-width="1.5"/><circle cx="8" cy="8" r="2.2" fill="#d9d8d6"/></svg>
<span class="st" style="left:954.5px;top:620px;letter-spacing:-0.4px">EPSG:32632</span>
<svg class="ic" style="left:1008.7px;top:621.0px" width="9.6" height="9.6" viewBox="0 0 16 16"><path d="M8 1.6 Q15.2 1.6 15.2 7 Q15.2 12.2 8.6 12.2 L5.4 15 L5.8 11.8 Q0.8 10.8 0.8 7 Q0.8 1.6 8 1.6Z" fill="#4a4945"/><circle cx="4.6" cy="7" r="1" fill="#f2f1f0"/><circle cx="8" cy="7" r="1" fill="#f2f1f0"/><circle cx="11.4" cy="7" r="1" fill="#f2f1f0"/></svg>
</body></html>
